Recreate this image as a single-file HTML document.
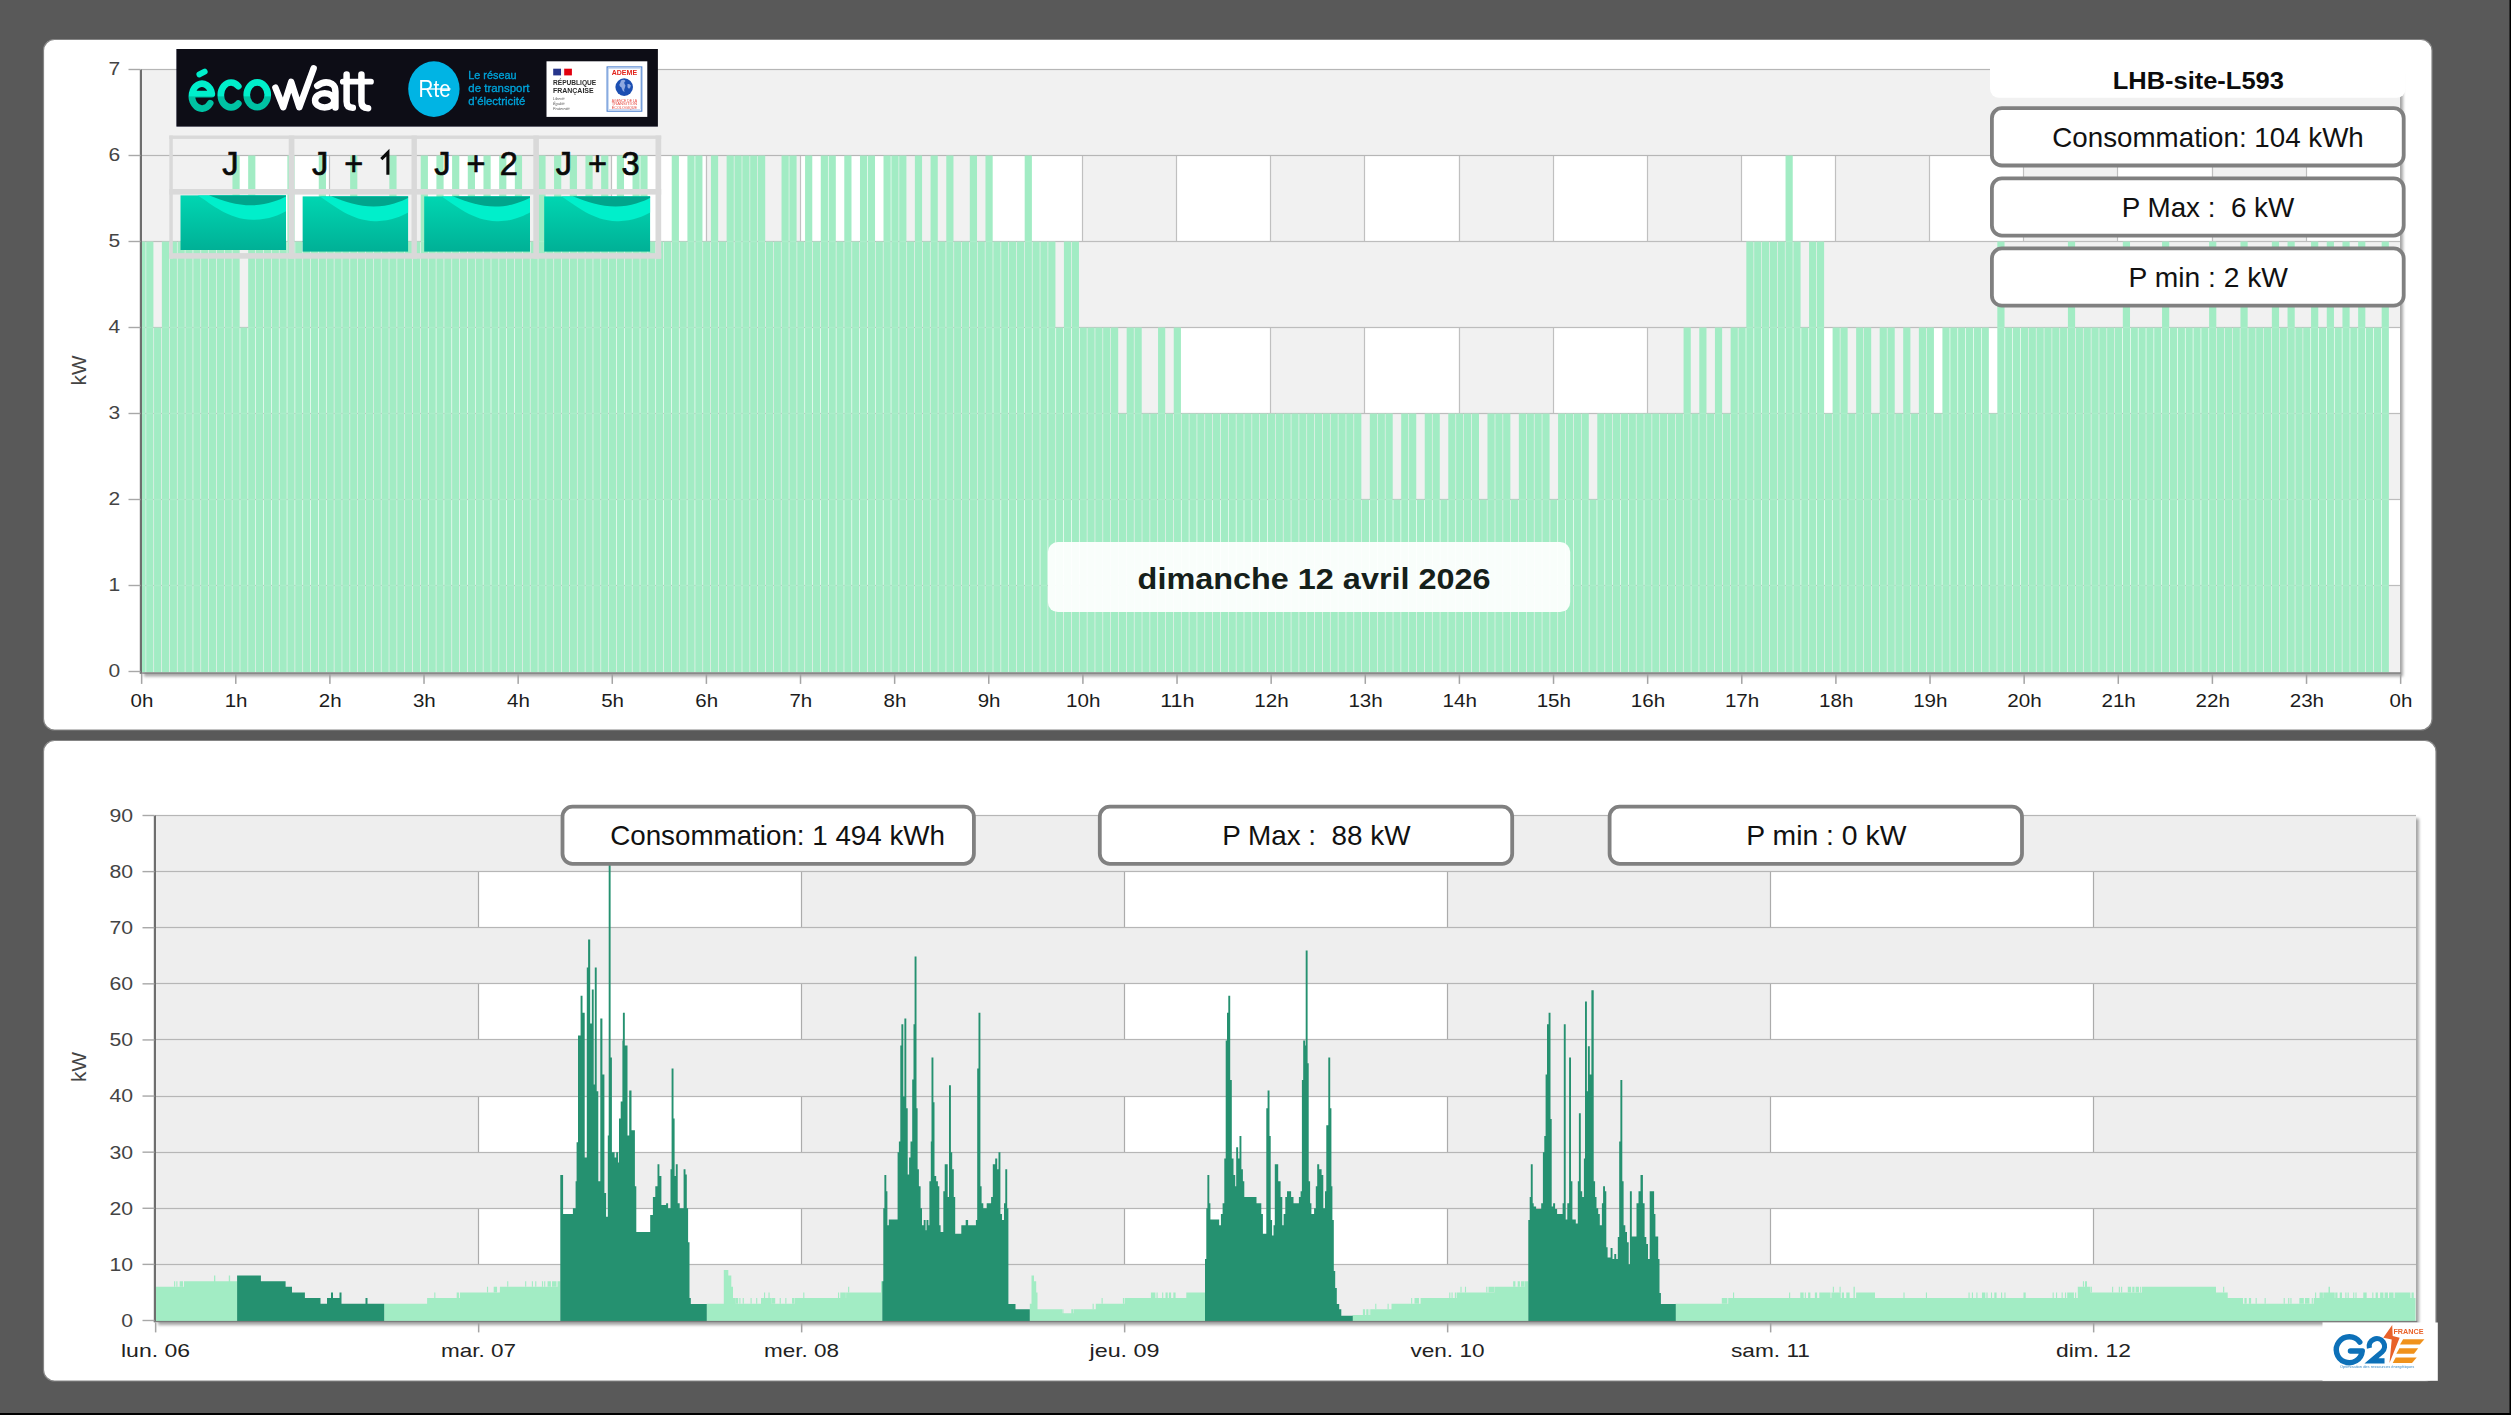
<!DOCTYPE html>
<html><head><meta charset="utf-8"><title>chart</title>
<style>html,body{margin:0;padding:0;background:#595959;}body{width:2511px;height:1415px;overflow:hidden;}svg{display:block;font-family:"Liberation Sans", sans-serif;}</style></head><body>
<svg width="2511" height="1415" viewBox="0 0 2511 1415">
<defs>
<filter id="sh" x="-2%" y="-2%" width="104%" height="104%"><feGaussianBlur stdDeviation="1.6"/></filter>
<filter id="b1" x="-2%" y="-2%" width="104%" height="104%"><feGaussianBlur stdDeviation="0.55"/></filter>
<clipPath id="cpTop"><rect x="141.0" y="69.5" width="2259.0" height="603.0"/></clipPath>
<linearGradient id="tg" x1="0" y1="0" x2="0" y2="1"><stop offset="0" stop-color="#00d6b2"/><stop offset="1" stop-color="#00b096"/></linearGradient>
<linearGradient id="eco" gradientUnits="userSpaceOnUse" x1="0" y1="300" x2="0" y2="680"><stop offset="0" stop-color="#00efcb"/><stop offset="0.52" stop-color="#00efcb"/><stop offset="0.56" stop-color="#00c2a3"/><stop offset="1" stop-color="#00c2a3"/></linearGradient>
</defs>
<rect width="2511" height="1415" fill="#595959"/>
<rect x="0" y="1413" width="2511" height="2" fill="#000"/>
<rect x="2509.5" y="0" width="1.5" height="1415" fill="#000"/>
<rect x="43.5" y="39.5" width="2388.5" height="690.5" rx="11" ry="11" fill="#ffffff" stroke="#858585" stroke-width="1.2"/>
<rect x="43.5" y="740.5" width="2392.5" height="640.5" rx="11" ry="11" fill="#ffffff" stroke="#858585" stroke-width="1.2"/>
<g id="topchart">
<rect x="144.0" y="72.5" width="2259.0" height="604.0" fill="#a6a6a6" filter="url(#sh)"/>
<rect x="141.0" y="69.5" width="2259.0" height="602.0" fill="#ffffff"/>
<rect x="141.0" y="69.50" width="2259.0" height="86.00" fill="#f1f1f1"/>
<rect x="141.0" y="241.50" width="2259.0" height="86.00" fill="#f1f1f1"/>
<rect x="141.0" y="413.50" width="2259.0" height="86.00" fill="#f1f1f1"/>
<rect x="141.0" y="585.50" width="2259.0" height="87.00" fill="#f1f1f1"/>
<rect x="141.00" y="69.5" width="94.12" height="602.0" fill="#f1f1f1"/>
<rect x="329.25" y="69.5" width="94.12" height="602.0" fill="#f1f1f1"/>
<rect x="517.50" y="69.5" width="94.12" height="602.0" fill="#f1f1f1"/>
<rect x="705.75" y="69.5" width="94.12" height="602.0" fill="#f1f1f1"/>
<rect x="894.00" y="69.5" width="94.12" height="602.0" fill="#f1f1f1"/>
<rect x="1082.25" y="69.5" width="94.12" height="602.0" fill="#f1f1f1"/>
<rect x="1270.50" y="69.5" width="94.12" height="602.0" fill="#f1f1f1"/>
<rect x="1458.75" y="69.5" width="94.12" height="602.0" fill="#f1f1f1"/>
<rect x="1647.00" y="69.5" width="94.12" height="602.0" fill="#f1f1f1"/>
<rect x="1835.25" y="69.5" width="94.12" height="602.0" fill="#f1f1f1"/>
<rect x="2023.50" y="69.5" width="94.12" height="602.0" fill="#f1f1f1"/>
<rect x="2211.75" y="69.5" width="94.12" height="602.0" fill="#f1f1f1"/>
<rect x="234.90" y="155.50" width="1.2" height="86.00" fill="#c0c0c0"/>
<rect x="234.90" y="327.50" width="1.2" height="86.00" fill="#c0c0c0"/>
<rect x="234.90" y="499.50" width="1.2" height="86.00" fill="#c0c0c0"/>
<rect x="328.90" y="155.50" width="1.2" height="86.00" fill="#c0c0c0"/>
<rect x="328.90" y="327.50" width="1.2" height="86.00" fill="#c0c0c0"/>
<rect x="328.90" y="499.50" width="1.2" height="86.00" fill="#c0c0c0"/>
<rect x="422.90" y="155.50" width="1.2" height="86.00" fill="#c0c0c0"/>
<rect x="422.90" y="327.50" width="1.2" height="86.00" fill="#c0c0c0"/>
<rect x="422.90" y="499.50" width="1.2" height="86.00" fill="#c0c0c0"/>
<rect x="516.90" y="155.50" width="1.2" height="86.00" fill="#c0c0c0"/>
<rect x="516.90" y="327.50" width="1.2" height="86.00" fill="#c0c0c0"/>
<rect x="516.90" y="499.50" width="1.2" height="86.00" fill="#c0c0c0"/>
<rect x="610.90" y="155.50" width="1.2" height="86.00" fill="#c0c0c0"/>
<rect x="610.90" y="327.50" width="1.2" height="86.00" fill="#c0c0c0"/>
<rect x="610.90" y="499.50" width="1.2" height="86.00" fill="#c0c0c0"/>
<rect x="705.90" y="155.50" width="1.2" height="86.00" fill="#c0c0c0"/>
<rect x="705.90" y="327.50" width="1.2" height="86.00" fill="#c0c0c0"/>
<rect x="705.90" y="499.50" width="1.2" height="86.00" fill="#c0c0c0"/>
<rect x="799.90" y="155.50" width="1.2" height="86.00" fill="#c0c0c0"/>
<rect x="799.90" y="327.50" width="1.2" height="86.00" fill="#c0c0c0"/>
<rect x="799.90" y="499.50" width="1.2" height="86.00" fill="#c0c0c0"/>
<rect x="893.90" y="155.50" width="1.2" height="86.00" fill="#c0c0c0"/>
<rect x="893.90" y="327.50" width="1.2" height="86.00" fill="#c0c0c0"/>
<rect x="893.90" y="499.50" width="1.2" height="86.00" fill="#c0c0c0"/>
<rect x="987.90" y="155.50" width="1.2" height="86.00" fill="#c0c0c0"/>
<rect x="987.90" y="327.50" width="1.2" height="86.00" fill="#c0c0c0"/>
<rect x="987.90" y="499.50" width="1.2" height="86.00" fill="#c0c0c0"/>
<rect x="1081.90" y="155.50" width="1.2" height="86.00" fill="#c0c0c0"/>
<rect x="1081.90" y="327.50" width="1.2" height="86.00" fill="#c0c0c0"/>
<rect x="1081.90" y="499.50" width="1.2" height="86.00" fill="#c0c0c0"/>
<rect x="1175.90" y="155.50" width="1.2" height="86.00" fill="#c0c0c0"/>
<rect x="1175.90" y="327.50" width="1.2" height="86.00" fill="#c0c0c0"/>
<rect x="1175.90" y="499.50" width="1.2" height="86.00" fill="#c0c0c0"/>
<rect x="1269.90" y="155.50" width="1.2" height="86.00" fill="#c0c0c0"/>
<rect x="1269.90" y="327.50" width="1.2" height="86.00" fill="#c0c0c0"/>
<rect x="1269.90" y="499.50" width="1.2" height="86.00" fill="#c0c0c0"/>
<rect x="1363.90" y="155.50" width="1.2" height="86.00" fill="#c0c0c0"/>
<rect x="1363.90" y="327.50" width="1.2" height="86.00" fill="#c0c0c0"/>
<rect x="1363.90" y="499.50" width="1.2" height="86.00" fill="#c0c0c0"/>
<rect x="1458.90" y="155.50" width="1.2" height="86.00" fill="#c0c0c0"/>
<rect x="1458.90" y="327.50" width="1.2" height="86.00" fill="#c0c0c0"/>
<rect x="1458.90" y="499.50" width="1.2" height="86.00" fill="#c0c0c0"/>
<rect x="1552.90" y="155.50" width="1.2" height="86.00" fill="#c0c0c0"/>
<rect x="1552.90" y="327.50" width="1.2" height="86.00" fill="#c0c0c0"/>
<rect x="1552.90" y="499.50" width="1.2" height="86.00" fill="#c0c0c0"/>
<rect x="1646.90" y="155.50" width="1.2" height="86.00" fill="#c0c0c0"/>
<rect x="1646.90" y="327.50" width="1.2" height="86.00" fill="#c0c0c0"/>
<rect x="1646.90" y="499.50" width="1.2" height="86.00" fill="#c0c0c0"/>
<rect x="1740.90" y="155.50" width="1.2" height="86.00" fill="#c0c0c0"/>
<rect x="1740.90" y="327.50" width="1.2" height="86.00" fill="#c0c0c0"/>
<rect x="1740.90" y="499.50" width="1.2" height="86.00" fill="#c0c0c0"/>
<rect x="1834.90" y="155.50" width="1.2" height="86.00" fill="#c0c0c0"/>
<rect x="1834.90" y="327.50" width="1.2" height="86.00" fill="#c0c0c0"/>
<rect x="1834.90" y="499.50" width="1.2" height="86.00" fill="#c0c0c0"/>
<rect x="1928.90" y="155.50" width="1.2" height="86.00" fill="#c0c0c0"/>
<rect x="1928.90" y="327.50" width="1.2" height="86.00" fill="#c0c0c0"/>
<rect x="1928.90" y="499.50" width="1.2" height="86.00" fill="#c0c0c0"/>
<rect x="2022.90" y="155.50" width="1.2" height="86.00" fill="#c0c0c0"/>
<rect x="2022.90" y="327.50" width="1.2" height="86.00" fill="#c0c0c0"/>
<rect x="2022.90" y="499.50" width="1.2" height="86.00" fill="#c0c0c0"/>
<rect x="2116.90" y="155.50" width="1.2" height="86.00" fill="#c0c0c0"/>
<rect x="2116.90" y="327.50" width="1.2" height="86.00" fill="#c0c0c0"/>
<rect x="2116.90" y="499.50" width="1.2" height="86.00" fill="#c0c0c0"/>
<rect x="2211.90" y="155.50" width="1.2" height="86.00" fill="#c0c0c0"/>
<rect x="2211.90" y="327.50" width="1.2" height="86.00" fill="#c0c0c0"/>
<rect x="2211.90" y="499.50" width="1.2" height="86.00" fill="#c0c0c0"/>
<rect x="2305.90" y="155.50" width="1.2" height="86.00" fill="#c0c0c0"/>
<rect x="2305.90" y="327.50" width="1.2" height="86.00" fill="#c0c0c0"/>
<rect x="2305.90" y="499.50" width="1.2" height="86.00" fill="#c0c0c0"/>
<rect x="141.0" y="584.90" width="2259.0" height="1.2" fill="#b6b6b6"/>
<rect x="141.0" y="498.90" width="2259.0" height="1.2" fill="#b6b6b6"/>
<rect x="141.0" y="412.90" width="2259.0" height="1.2" fill="#b6b6b6"/>
<rect x="141.0" y="326.90" width="2259.0" height="1.2" fill="#b6b6b6"/>
<rect x="141.0" y="240.90" width="2259.0" height="1.2" fill="#b6b6b6"/>
<rect x="141.0" y="154.90" width="2259.0" height="1.2" fill="#b6b6b6"/>
<rect x="141.0" y="68.90" width="2259.0" height="1.2" fill="#b6b6b6"/>
<g fill="#a2ecc4" clip-path="url(#cpTop)">
<rect x="138.35" y="241.50" width="7.2" height="431.00"/>
<rect x="146.19" y="241.50" width="7.2" height="431.00"/>
<rect x="154.04" y="327.50" width="7.2" height="345.00"/>
<rect x="161.88" y="241.50" width="7.2" height="431.00"/>
<rect x="169.72" y="241.50" width="7.2" height="431.00"/>
<rect x="177.57" y="241.50" width="7.2" height="431.00"/>
<rect x="185.41" y="241.50" width="7.2" height="431.00"/>
<rect x="193.26" y="241.50" width="7.2" height="431.00"/>
<rect x="201.10" y="241.50" width="7.2" height="431.00"/>
<rect x="208.94" y="241.50" width="7.2" height="431.00"/>
<rect x="216.79" y="241.50" width="7.2" height="431.00"/>
<rect x="224.63" y="241.50" width="7.2" height="431.00"/>
<rect x="232.47" y="155.50" width="7.2" height="517.00"/>
<rect x="240.32" y="327.50" width="7.2" height="345.00"/>
<rect x="248.16" y="155.50" width="7.2" height="517.00"/>
<rect x="256.01" y="241.50" width="7.2" height="431.00"/>
<rect x="263.85" y="241.50" width="7.2" height="431.00"/>
<rect x="271.69" y="241.50" width="7.2" height="431.00"/>
<rect x="279.54" y="241.50" width="7.2" height="431.00"/>
<rect x="287.38" y="155.50" width="7.2" height="517.00"/>
<rect x="295.22" y="241.50" width="7.2" height="431.00"/>
<rect x="303.07" y="241.50" width="7.2" height="431.00"/>
<rect x="310.91" y="241.50" width="7.2" height="431.00"/>
<rect x="318.76" y="155.50" width="7.2" height="517.00"/>
<rect x="326.60" y="241.50" width="7.2" height="431.00"/>
<rect x="334.44" y="241.50" width="7.2" height="431.00"/>
<rect x="342.29" y="241.50" width="7.2" height="431.00"/>
<rect x="350.13" y="155.50" width="7.2" height="517.00"/>
<rect x="357.97" y="241.50" width="7.2" height="431.00"/>
<rect x="365.82" y="241.50" width="7.2" height="431.00"/>
<rect x="373.66" y="241.50" width="7.2" height="431.00"/>
<rect x="381.51" y="241.50" width="7.2" height="431.00"/>
<rect x="389.35" y="155.50" width="7.2" height="517.00"/>
<rect x="397.19" y="241.50" width="7.2" height="431.00"/>
<rect x="405.04" y="241.50" width="7.2" height="431.00"/>
<rect x="412.88" y="241.50" width="7.2" height="431.00"/>
<rect x="420.72" y="155.50" width="7.2" height="517.00"/>
<rect x="428.57" y="241.50" width="7.2" height="431.00"/>
<rect x="436.41" y="155.50" width="7.2" height="517.00"/>
<rect x="444.26" y="241.50" width="7.2" height="431.00"/>
<rect x="452.10" y="155.50" width="7.2" height="517.00"/>
<rect x="459.94" y="241.50" width="7.2" height="431.00"/>
<rect x="467.79" y="155.50" width="7.2" height="517.00"/>
<rect x="475.63" y="241.50" width="7.2" height="431.00"/>
<rect x="483.47" y="155.50" width="7.2" height="517.00"/>
<rect x="491.32" y="241.50" width="7.2" height="431.00"/>
<rect x="499.16" y="155.50" width="7.2" height="517.00"/>
<rect x="507.01" y="241.50" width="7.2" height="431.00"/>
<rect x="514.85" y="155.50" width="7.2" height="517.00"/>
<rect x="522.69" y="241.50" width="7.2" height="431.00"/>
<rect x="530.54" y="241.50" width="7.2" height="431.00"/>
<rect x="538.38" y="155.50" width="7.2" height="517.00"/>
<rect x="546.23" y="241.50" width="7.2" height="431.00"/>
<rect x="554.07" y="155.50" width="7.2" height="517.00"/>
<rect x="561.91" y="241.50" width="7.2" height="431.00"/>
<rect x="569.76" y="155.50" width="7.2" height="517.00"/>
<rect x="577.60" y="241.50" width="7.2" height="431.00"/>
<rect x="585.44" y="155.50" width="7.2" height="517.00"/>
<rect x="593.29" y="241.50" width="7.2" height="431.00"/>
<rect x="601.13" y="155.50" width="7.2" height="517.00"/>
<rect x="608.98" y="241.50" width="7.2" height="431.00"/>
<rect x="616.82" y="155.50" width="7.2" height="517.00"/>
<rect x="624.66" y="241.50" width="7.2" height="431.00"/>
<rect x="632.51" y="155.50" width="7.2" height="517.00"/>
<rect x="640.35" y="155.50" width="7.2" height="517.00"/>
<rect x="648.19" y="241.50" width="7.2" height="431.00"/>
<rect x="656.04" y="241.50" width="7.2" height="431.00"/>
<rect x="663.88" y="241.50" width="7.2" height="431.00"/>
<rect x="671.73" y="155.50" width="7.2" height="517.00"/>
<rect x="679.57" y="241.50" width="7.2" height="431.00"/>
<rect x="687.41" y="155.50" width="7.2" height="517.00"/>
<rect x="695.26" y="155.50" width="7.2" height="517.00"/>
<rect x="703.10" y="241.50" width="7.2" height="431.00"/>
<rect x="710.94" y="155.50" width="7.2" height="517.00"/>
<rect x="718.79" y="241.50" width="7.2" height="431.00"/>
<rect x="726.63" y="155.50" width="7.2" height="517.00"/>
<rect x="734.48" y="155.50" width="7.2" height="517.00"/>
<rect x="742.32" y="155.50" width="7.2" height="517.00"/>
<rect x="750.16" y="155.50" width="7.2" height="517.00"/>
<rect x="758.01" y="155.50" width="7.2" height="517.00"/>
<rect x="765.85" y="241.50" width="7.2" height="431.00"/>
<rect x="773.69" y="241.50" width="7.2" height="431.00"/>
<rect x="781.54" y="155.50" width="7.2" height="517.00"/>
<rect x="789.38" y="155.50" width="7.2" height="517.00"/>
<rect x="797.23" y="241.50" width="7.2" height="431.00"/>
<rect x="805.07" y="155.50" width="7.2" height="517.00"/>
<rect x="812.91" y="241.50" width="7.2" height="431.00"/>
<rect x="820.76" y="155.50" width="7.2" height="517.00"/>
<rect x="828.60" y="155.50" width="7.2" height="517.00"/>
<rect x="836.44" y="241.50" width="7.2" height="431.00"/>
<rect x="844.29" y="155.50" width="7.2" height="517.00"/>
<rect x="852.13" y="241.50" width="7.2" height="431.00"/>
<rect x="859.98" y="155.50" width="7.2" height="517.00"/>
<rect x="867.82" y="155.50" width="7.2" height="517.00"/>
<rect x="875.66" y="241.50" width="7.2" height="431.00"/>
<rect x="883.51" y="155.50" width="7.2" height="517.00"/>
<rect x="891.35" y="155.50" width="7.2" height="517.00"/>
<rect x="899.19" y="155.50" width="7.2" height="517.00"/>
<rect x="907.04" y="241.50" width="7.2" height="431.00"/>
<rect x="914.88" y="155.50" width="7.2" height="517.00"/>
<rect x="922.73" y="241.50" width="7.2" height="431.00"/>
<rect x="930.57" y="155.50" width="7.2" height="517.00"/>
<rect x="938.41" y="241.50" width="7.2" height="431.00"/>
<rect x="946.26" y="155.50" width="7.2" height="517.00"/>
<rect x="954.10" y="241.50" width="7.2" height="431.00"/>
<rect x="961.94" y="241.50" width="7.2" height="431.00"/>
<rect x="969.79" y="155.50" width="7.2" height="517.00"/>
<rect x="977.63" y="241.50" width="7.2" height="431.00"/>
<rect x="985.48" y="155.50" width="7.2" height="517.00"/>
<rect x="993.32" y="241.50" width="7.2" height="431.00"/>
<rect x="1001.16" y="241.50" width="7.2" height="431.00"/>
<rect x="1009.01" y="241.50" width="7.2" height="431.00"/>
<rect x="1016.85" y="241.50" width="7.2" height="431.00"/>
<rect x="1024.69" y="155.50" width="7.2" height="517.00"/>
<rect x="1032.54" y="241.50" width="7.2" height="431.00"/>
<rect x="1040.38" y="241.50" width="7.2" height="431.00"/>
<rect x="1048.23" y="241.50" width="7.2" height="431.00"/>
<rect x="1056.07" y="327.50" width="7.2" height="345.00"/>
<rect x="1063.91" y="241.50" width="7.2" height="431.00"/>
<rect x="1071.76" y="241.50" width="7.2" height="431.00"/>
<rect x="1079.60" y="327.50" width="7.2" height="345.00"/>
<rect x="1087.44" y="327.50" width="7.2" height="345.00"/>
<rect x="1095.29" y="327.50" width="7.2" height="345.00"/>
<rect x="1103.13" y="327.50" width="7.2" height="345.00"/>
<rect x="1110.98" y="327.50" width="7.2" height="345.00"/>
<rect x="1118.82" y="413.50" width="7.2" height="259.00"/>
<rect x="1126.66" y="327.50" width="7.2" height="345.00"/>
<rect x="1134.51" y="327.50" width="7.2" height="345.00"/>
<rect x="1142.35" y="413.50" width="7.2" height="259.00"/>
<rect x="1150.19" y="413.50" width="7.2" height="259.00"/>
<rect x="1158.04" y="327.50" width="7.2" height="345.00"/>
<rect x="1165.88" y="413.50" width="7.2" height="259.00"/>
<rect x="1173.73" y="327.50" width="7.2" height="345.00"/>
<rect x="1181.57" y="413.50" width="7.2" height="259.00"/>
<rect x="1189.41" y="413.50" width="7.2" height="259.00"/>
<rect x="1197.26" y="413.50" width="7.2" height="259.00"/>
<rect x="1205.10" y="413.50" width="7.2" height="259.00"/>
<rect x="1212.94" y="413.50" width="7.2" height="259.00"/>
<rect x="1220.79" y="413.50" width="7.2" height="259.00"/>
<rect x="1228.63" y="413.50" width="7.2" height="259.00"/>
<rect x="1236.48" y="413.50" width="7.2" height="259.00"/>
<rect x="1244.32" y="413.50" width="7.2" height="259.00"/>
<rect x="1252.16" y="413.50" width="7.2" height="259.00"/>
<rect x="1260.01" y="413.50" width="7.2" height="259.00"/>
<rect x="1267.85" y="413.50" width="7.2" height="259.00"/>
<rect x="1275.69" y="413.50" width="7.2" height="259.00"/>
<rect x="1283.54" y="413.50" width="7.2" height="259.00"/>
<rect x="1291.38" y="413.50" width="7.2" height="259.00"/>
<rect x="1299.23" y="413.50" width="7.2" height="259.00"/>
<rect x="1307.07" y="413.50" width="7.2" height="259.00"/>
<rect x="1314.91" y="413.50" width="7.2" height="259.00"/>
<rect x="1322.76" y="413.50" width="7.2" height="259.00"/>
<rect x="1330.60" y="413.50" width="7.2" height="259.00"/>
<rect x="1338.44" y="413.50" width="7.2" height="259.00"/>
<rect x="1346.29" y="413.50" width="7.2" height="259.00"/>
<rect x="1354.13" y="413.50" width="7.2" height="259.00"/>
<rect x="1361.98" y="499.50" width="7.2" height="173.00"/>
<rect x="1369.82" y="413.50" width="7.2" height="259.00"/>
<rect x="1377.66" y="413.50" width="7.2" height="259.00"/>
<rect x="1385.51" y="413.50" width="7.2" height="259.00"/>
<rect x="1393.35" y="499.50" width="7.2" height="173.00"/>
<rect x="1401.19" y="413.50" width="7.2" height="259.00"/>
<rect x="1409.04" y="413.50" width="7.2" height="259.00"/>
<rect x="1416.88" y="499.50" width="7.2" height="173.00"/>
<rect x="1424.73" y="413.50" width="7.2" height="259.00"/>
<rect x="1432.57" y="413.50" width="7.2" height="259.00"/>
<rect x="1440.41" y="499.50" width="7.2" height="173.00"/>
<rect x="1448.26" y="413.50" width="7.2" height="259.00"/>
<rect x="1456.10" y="413.50" width="7.2" height="259.00"/>
<rect x="1463.94" y="413.50" width="7.2" height="259.00"/>
<rect x="1471.79" y="413.50" width="7.2" height="259.00"/>
<rect x="1479.63" y="499.50" width="7.2" height="173.00"/>
<rect x="1487.48" y="413.50" width="7.2" height="259.00"/>
<rect x="1495.32" y="413.50" width="7.2" height="259.00"/>
<rect x="1503.16" y="413.50" width="7.2" height="259.00"/>
<rect x="1511.01" y="499.50" width="7.2" height="173.00"/>
<rect x="1518.85" y="413.50" width="7.2" height="259.00"/>
<rect x="1526.69" y="413.50" width="7.2" height="259.00"/>
<rect x="1534.54" y="413.50" width="7.2" height="259.00"/>
<rect x="1542.38" y="413.50" width="7.2" height="259.00"/>
<rect x="1550.23" y="499.50" width="7.2" height="173.00"/>
<rect x="1558.07" y="413.50" width="7.2" height="259.00"/>
<rect x="1565.91" y="413.50" width="7.2" height="259.00"/>
<rect x="1573.76" y="413.50" width="7.2" height="259.00"/>
<rect x="1581.60" y="413.50" width="7.2" height="259.00"/>
<rect x="1589.44" y="499.50" width="7.2" height="173.00"/>
<rect x="1597.29" y="413.50" width="7.2" height="259.00"/>
<rect x="1605.13" y="413.50" width="7.2" height="259.00"/>
<rect x="1612.98" y="413.50" width="7.2" height="259.00"/>
<rect x="1620.82" y="413.50" width="7.2" height="259.00"/>
<rect x="1628.66" y="413.50" width="7.2" height="259.00"/>
<rect x="1636.51" y="413.50" width="7.2" height="259.00"/>
<rect x="1644.35" y="413.50" width="7.2" height="259.00"/>
<rect x="1652.19" y="413.50" width="7.2" height="259.00"/>
<rect x="1660.04" y="413.50" width="7.2" height="259.00"/>
<rect x="1667.88" y="413.50" width="7.2" height="259.00"/>
<rect x="1675.73" y="413.50" width="7.2" height="259.00"/>
<rect x="1683.57" y="327.50" width="7.2" height="345.00"/>
<rect x="1691.41" y="413.50" width="7.2" height="259.00"/>
<rect x="1699.26" y="327.50" width="7.2" height="345.00"/>
<rect x="1707.10" y="413.50" width="7.2" height="259.00"/>
<rect x="1714.94" y="327.50" width="7.2" height="345.00"/>
<rect x="1722.79" y="413.50" width="7.2" height="259.00"/>
<rect x="1730.63" y="327.50" width="7.2" height="345.00"/>
<rect x="1738.48" y="327.50" width="7.2" height="345.00"/>
<rect x="1746.32" y="241.50" width="7.2" height="431.00"/>
<rect x="1754.16" y="241.50" width="7.2" height="431.00"/>
<rect x="1762.01" y="241.50" width="7.2" height="431.00"/>
<rect x="1769.85" y="241.50" width="7.2" height="431.00"/>
<rect x="1777.69" y="241.50" width="7.2" height="431.00"/>
<rect x="1785.54" y="155.50" width="7.2" height="517.00"/>
<rect x="1793.38" y="241.50" width="7.2" height="431.00"/>
<rect x="1801.23" y="327.50" width="7.2" height="345.00"/>
<rect x="1809.07" y="241.50" width="7.2" height="431.00"/>
<rect x="1816.91" y="241.50" width="7.2" height="431.00"/>
<rect x="1824.76" y="413.50" width="7.2" height="259.00"/>
<rect x="1832.60" y="327.50" width="7.2" height="345.00"/>
<rect x="1840.44" y="327.50" width="7.2" height="345.00"/>
<rect x="1848.29" y="413.50" width="7.2" height="259.00"/>
<rect x="1856.13" y="327.50" width="7.2" height="345.00"/>
<rect x="1863.98" y="327.50" width="7.2" height="345.00"/>
<rect x="1871.82" y="413.50" width="7.2" height="259.00"/>
<rect x="1879.66" y="327.50" width="7.2" height="345.00"/>
<rect x="1887.51" y="327.50" width="7.2" height="345.00"/>
<rect x="1895.35" y="413.50" width="7.2" height="259.00"/>
<rect x="1903.19" y="327.50" width="7.2" height="345.00"/>
<rect x="1911.04" y="413.50" width="7.2" height="259.00"/>
<rect x="1918.88" y="327.50" width="7.2" height="345.00"/>
<rect x="1926.73" y="327.50" width="7.2" height="345.00"/>
<rect x="1934.57" y="413.50" width="7.2" height="259.00"/>
<rect x="1942.41" y="327.50" width="7.2" height="345.00"/>
<rect x="1950.26" y="327.50" width="7.2" height="345.00"/>
<rect x="1958.10" y="327.50" width="7.2" height="345.00"/>
<rect x="1965.94" y="327.50" width="7.2" height="345.00"/>
<rect x="1973.79" y="327.50" width="7.2" height="345.00"/>
<rect x="1981.63" y="327.50" width="7.2" height="345.00"/>
<rect x="1989.48" y="413.50" width="7.2" height="259.00"/>
<rect x="1997.32" y="241.50" width="7.2" height="431.00"/>
<rect x="2005.16" y="327.50" width="7.2" height="345.00"/>
<rect x="2013.01" y="327.50" width="7.2" height="345.00"/>
<rect x="2020.85" y="327.50" width="7.2" height="345.00"/>
<rect x="2028.69" y="327.50" width="7.2" height="345.00"/>
<rect x="2036.54" y="327.50" width="7.2" height="345.00"/>
<rect x="2044.38" y="327.50" width="7.2" height="345.00"/>
<rect x="2052.22" y="327.50" width="7.2" height="345.00"/>
<rect x="2060.07" y="327.50" width="7.2" height="345.00"/>
<rect x="2067.91" y="241.50" width="7.2" height="431.00"/>
<rect x="2075.76" y="327.50" width="7.2" height="345.00"/>
<rect x="2083.60" y="327.50" width="7.2" height="345.00"/>
<rect x="2091.44" y="327.50" width="7.2" height="345.00"/>
<rect x="2099.29" y="327.50" width="7.2" height="345.00"/>
<rect x="2107.13" y="327.50" width="7.2" height="345.00"/>
<rect x="2114.97" y="327.50" width="7.2" height="345.00"/>
<rect x="2122.82" y="241.50" width="7.2" height="431.00"/>
<rect x="2130.66" y="327.50" width="7.2" height="345.00"/>
<rect x="2138.51" y="327.50" width="7.2" height="345.00"/>
<rect x="2146.35" y="327.50" width="7.2" height="345.00"/>
<rect x="2154.19" y="327.50" width="7.2" height="345.00"/>
<rect x="2162.04" y="241.50" width="7.2" height="431.00"/>
<rect x="2169.88" y="327.50" width="7.2" height="345.00"/>
<rect x="2177.72" y="327.50" width="7.2" height="345.00"/>
<rect x="2185.57" y="327.50" width="7.2" height="345.00"/>
<rect x="2193.41" y="327.50" width="7.2" height="345.00"/>
<rect x="2201.26" y="327.50" width="7.2" height="345.00"/>
<rect x="2209.10" y="241.50" width="7.2" height="431.00"/>
<rect x="2216.94" y="327.50" width="7.2" height="345.00"/>
<rect x="2224.79" y="327.50" width="7.2" height="345.00"/>
<rect x="2232.63" y="327.50" width="7.2" height="345.00"/>
<rect x="2240.47" y="241.50" width="7.2" height="431.00"/>
<rect x="2248.32" y="327.50" width="7.2" height="345.00"/>
<rect x="2256.16" y="327.50" width="7.2" height="345.00"/>
<rect x="2264.01" y="327.50" width="7.2" height="345.00"/>
<rect x="2271.85" y="241.50" width="7.2" height="431.00"/>
<rect x="2279.69" y="327.50" width="7.2" height="345.00"/>
<rect x="2287.54" y="241.50" width="7.2" height="431.00"/>
<rect x="2295.38" y="327.50" width="7.2" height="345.00"/>
<rect x="2303.22" y="327.50" width="7.2" height="345.00"/>
<rect x="2311.07" y="241.50" width="7.2" height="431.00"/>
<rect x="2318.91" y="327.50" width="7.2" height="345.00"/>
<rect x="2326.76" y="241.50" width="7.2" height="431.00"/>
<rect x="2334.60" y="327.50" width="7.2" height="345.00"/>
<rect x="2342.44" y="241.50" width="7.2" height="431.00"/>
<rect x="2350.29" y="327.50" width="7.2" height="345.00"/>
<rect x="2358.13" y="241.50" width="7.2" height="431.00"/>
<rect x="2365.97" y="327.50" width="7.2" height="345.00"/>
<rect x="2373.82" y="327.50" width="7.2" height="345.00"/>
<rect x="2381.66" y="241.50" width="7.2" height="431.00"/>
</g>
<rect x="141.0" y="584.70" width="2259.0" height="1.6" fill="#ffffff" opacity="0.10"/>
<rect x="141.0" y="498.70" width="2259.0" height="1.6" fill="#ffffff" opacity="0.10"/>
<rect x="141.0" y="412.70" width="2259.0" height="1.6" fill="#ffffff" opacity="0.10"/>
<rect x="141.0" y="326.70" width="2259.0" height="1.6" fill="#ffffff" opacity="0.10"/>
<rect x="141.0" y="240.70" width="2259.0" height="1.6" fill="#ffffff" opacity="0.10"/>
<rect x="139.8" y="69.5" width="2.2" height="604.2" fill="#6e6e6e"/>
<rect x="139.8" y="672.4" width="2261.4" height="1.3" fill="#7c7c7c"/>
<rect x="128.5" y="670.80" width="12" height="1.4" fill="#a8a8a8"/>
<text x="108.5" y="677.20" font-size="18.7" fill="#444" textLength="11.7" lengthAdjust="spacingAndGlyphs">0</text>
<rect x="128.5" y="584.80" width="12" height="1.4" fill="#a8a8a8"/>
<text x="108.5" y="591.20" font-size="18.7" fill="#444" textLength="11.7" lengthAdjust="spacingAndGlyphs">1</text>
<rect x="128.5" y="498.80" width="12" height="1.4" fill="#a8a8a8"/>
<text x="108.5" y="505.20" font-size="18.7" fill="#444" textLength="11.7" lengthAdjust="spacingAndGlyphs">2</text>
<rect x="128.5" y="412.80" width="12" height="1.4" fill="#a8a8a8"/>
<text x="108.5" y="419.20" font-size="18.7" fill="#444" textLength="11.7" lengthAdjust="spacingAndGlyphs">3</text>
<rect x="128.5" y="326.80" width="12" height="1.4" fill="#a8a8a8"/>
<text x="108.5" y="333.20" font-size="18.7" fill="#444" textLength="11.7" lengthAdjust="spacingAndGlyphs">4</text>
<rect x="128.5" y="240.80" width="12" height="1.4" fill="#a8a8a8"/>
<text x="108.5" y="247.20" font-size="18.7" fill="#444" textLength="11.7" lengthAdjust="spacingAndGlyphs">5</text>
<rect x="128.5" y="154.80" width="12" height="1.4" fill="#a8a8a8"/>
<text x="108.5" y="161.20" font-size="18.7" fill="#444" textLength="11.7" lengthAdjust="spacingAndGlyphs">6</text>
<rect x="128.5" y="68.80" width="12" height="1.4" fill="#a8a8a8"/>
<text x="108.5" y="75.20" font-size="18.7" fill="#444" textLength="11.7" lengthAdjust="spacingAndGlyphs">7</text>
<rect x="140.90" y="673.9" width="1.5" height="10" fill="#a4a4a4"/>
<text x="130.60" y="706.5" font-size="18.5" fill="#1c1c1c" textLength="22.8" lengthAdjust="spacingAndGlyphs">0h</text>
<rect x="235.03" y="673.9" width="1.5" height="10" fill="#a4a4a4"/>
<text x="224.72" y="706.5" font-size="18.5" fill="#1c1c1c" textLength="22.8" lengthAdjust="spacingAndGlyphs">1h</text>
<rect x="329.15" y="673.9" width="1.5" height="10" fill="#a4a4a4"/>
<text x="318.85" y="706.5" font-size="18.5" fill="#1c1c1c" textLength="22.8" lengthAdjust="spacingAndGlyphs">2h</text>
<rect x="423.27" y="673.9" width="1.5" height="10" fill="#a4a4a4"/>
<text x="412.98" y="706.5" font-size="18.5" fill="#1c1c1c" textLength="22.8" lengthAdjust="spacingAndGlyphs">3h</text>
<rect x="517.40" y="673.9" width="1.5" height="10" fill="#a4a4a4"/>
<text x="507.10" y="706.5" font-size="18.5" fill="#1c1c1c" textLength="22.8" lengthAdjust="spacingAndGlyphs">4h</text>
<rect x="611.52" y="673.9" width="1.5" height="10" fill="#a4a4a4"/>
<text x="601.23" y="706.5" font-size="18.5" fill="#1c1c1c" textLength="22.8" lengthAdjust="spacingAndGlyphs">5h</text>
<rect x="705.65" y="673.9" width="1.5" height="10" fill="#a4a4a4"/>
<text x="695.35" y="706.5" font-size="18.5" fill="#1c1c1c" textLength="22.8" lengthAdjust="spacingAndGlyphs">6h</text>
<rect x="799.77" y="673.9" width="1.5" height="10" fill="#a4a4a4"/>
<text x="789.48" y="706.5" font-size="18.5" fill="#1c1c1c" textLength="22.8" lengthAdjust="spacingAndGlyphs">7h</text>
<rect x="893.90" y="673.9" width="1.5" height="10" fill="#a4a4a4"/>
<text x="883.60" y="706.5" font-size="18.5" fill="#1c1c1c" textLength="22.8" lengthAdjust="spacingAndGlyphs">8h</text>
<rect x="988.02" y="673.9" width="1.5" height="10" fill="#a4a4a4"/>
<text x="977.73" y="706.5" font-size="18.5" fill="#1c1c1c" textLength="22.8" lengthAdjust="spacingAndGlyphs">9h</text>
<rect x="1082.15" y="673.9" width="1.5" height="10" fill="#a4a4a4"/>
<text x="1066.05" y="706.5" font-size="18.5" fill="#1c1c1c" textLength="34.4" lengthAdjust="spacingAndGlyphs">10h</text>
<rect x="1176.28" y="673.9" width="1.5" height="10" fill="#a4a4a4"/>
<text x="1160.17" y="706.5" font-size="18.5" fill="#1c1c1c" textLength="34.4" lengthAdjust="spacingAndGlyphs">11h</text>
<rect x="1270.40" y="673.9" width="1.5" height="10" fill="#a4a4a4"/>
<text x="1254.30" y="706.5" font-size="18.5" fill="#1c1c1c" textLength="34.4" lengthAdjust="spacingAndGlyphs">12h</text>
<rect x="1364.53" y="673.9" width="1.5" height="10" fill="#a4a4a4"/>
<text x="1348.42" y="706.5" font-size="18.5" fill="#1c1c1c" textLength="34.4" lengthAdjust="spacingAndGlyphs">13h</text>
<rect x="1458.65" y="673.9" width="1.5" height="10" fill="#a4a4a4"/>
<text x="1442.55" y="706.5" font-size="18.5" fill="#1c1c1c" textLength="34.4" lengthAdjust="spacingAndGlyphs">14h</text>
<rect x="1552.78" y="673.9" width="1.5" height="10" fill="#a4a4a4"/>
<text x="1536.67" y="706.5" font-size="18.5" fill="#1c1c1c" textLength="34.4" lengthAdjust="spacingAndGlyphs">15h</text>
<rect x="1646.90" y="673.9" width="1.5" height="10" fill="#a4a4a4"/>
<text x="1630.80" y="706.5" font-size="18.5" fill="#1c1c1c" textLength="34.4" lengthAdjust="spacingAndGlyphs">16h</text>
<rect x="1741.03" y="673.9" width="1.5" height="10" fill="#a4a4a4"/>
<text x="1724.92" y="706.5" font-size="18.5" fill="#1c1c1c" textLength="34.4" lengthAdjust="spacingAndGlyphs">17h</text>
<rect x="1835.15" y="673.9" width="1.5" height="10" fill="#a4a4a4"/>
<text x="1819.05" y="706.5" font-size="18.5" fill="#1c1c1c" textLength="34.4" lengthAdjust="spacingAndGlyphs">18h</text>
<rect x="1929.28" y="673.9" width="1.5" height="10" fill="#a4a4a4"/>
<text x="1913.17" y="706.5" font-size="18.5" fill="#1c1c1c" textLength="34.4" lengthAdjust="spacingAndGlyphs">19h</text>
<rect x="2023.40" y="673.9" width="1.5" height="10" fill="#a4a4a4"/>
<text x="2007.30" y="706.5" font-size="18.5" fill="#1c1c1c" textLength="34.4" lengthAdjust="spacingAndGlyphs">20h</text>
<rect x="2117.53" y="673.9" width="1.5" height="10" fill="#a4a4a4"/>
<text x="2101.43" y="706.5" font-size="18.5" fill="#1c1c1c" textLength="34.4" lengthAdjust="spacingAndGlyphs">21h</text>
<rect x="2211.65" y="673.9" width="1.5" height="10" fill="#a4a4a4"/>
<text x="2195.55" y="706.5" font-size="18.5" fill="#1c1c1c" textLength="34.4" lengthAdjust="spacingAndGlyphs">22h</text>
<rect x="2305.78" y="673.9" width="1.5" height="10" fill="#a4a4a4"/>
<text x="2289.68" y="706.5" font-size="18.5" fill="#1c1c1c" textLength="34.4" lengthAdjust="spacingAndGlyphs">23h</text>
<rect x="2399.90" y="673.9" width="1.5" height="10" fill="#a4a4a4"/>
<text x="2389.60" y="706.5" font-size="18.5" fill="#1c1c1c" textLength="22.8" lengthAdjust="spacingAndGlyphs">0h</text>
<text transform="translate(85.5,370.5) rotate(-90)" text-anchor="middle" font-size="20" fill="#444" textLength="30" lengthAdjust="spacingAndGlyphs">kW</text>
</g>
<g id="botchart">
<rect x="158.0" y="818.5" width="2261.0" height="506.6" fill="#a6a6a6" filter="url(#sh)"/>
<rect x="155.0" y="815.5" width="2261.0" height="505.0" fill="#ffffff"/>
<rect x="155.0" y="815.50" width="2261.0" height="56.11" fill="#eeeeee"/>
<rect x="155.0" y="927.72" width="2261.0" height="56.11" fill="#eeeeee"/>
<rect x="155.0" y="1039.94" width="2261.0" height="56.11" fill="#eeeeee"/>
<rect x="155.0" y="1152.17" width="2261.0" height="56.11" fill="#eeeeee"/>
<rect x="155.0" y="1264.39" width="2261.0" height="56.61" fill="#eeeeee"/>
<rect x="155.00" y="815.5" width="323.00" height="505.0" fill="#eeeeee"/>
<rect x="801.00" y="815.5" width="323.00" height="505.0" fill="#eeeeee"/>
<rect x="1447.00" y="815.5" width="323.00" height="505.0" fill="#eeeeee"/>
<rect x="2093.00" y="815.5" width="323.00" height="505.0" fill="#eeeeee"/>
<rect x="477.90" y="871.61" width="1.2" height="56.11" fill="#ababab"/>
<rect x="477.90" y="983.83" width="1.2" height="56.11" fill="#ababab"/>
<rect x="477.90" y="1096.06" width="1.2" height="56.11" fill="#ababab"/>
<rect x="477.90" y="1208.28" width="1.2" height="56.11" fill="#ababab"/>
<rect x="800.90" y="871.61" width="1.2" height="56.11" fill="#ababab"/>
<rect x="800.90" y="983.83" width="1.2" height="56.11" fill="#ababab"/>
<rect x="800.90" y="1096.06" width="1.2" height="56.11" fill="#ababab"/>
<rect x="800.90" y="1208.28" width="1.2" height="56.11" fill="#ababab"/>
<rect x="1123.90" y="871.61" width="1.2" height="56.11" fill="#ababab"/>
<rect x="1123.90" y="983.83" width="1.2" height="56.11" fill="#ababab"/>
<rect x="1123.90" y="1096.06" width="1.2" height="56.11" fill="#ababab"/>
<rect x="1123.90" y="1208.28" width="1.2" height="56.11" fill="#ababab"/>
<rect x="1446.90" y="871.61" width="1.2" height="56.11" fill="#ababab"/>
<rect x="1446.90" y="983.83" width="1.2" height="56.11" fill="#ababab"/>
<rect x="1446.90" y="1096.06" width="1.2" height="56.11" fill="#ababab"/>
<rect x="1446.90" y="1208.28" width="1.2" height="56.11" fill="#ababab"/>
<rect x="1769.90" y="871.61" width="1.2" height="56.11" fill="#ababab"/>
<rect x="1769.90" y="983.83" width="1.2" height="56.11" fill="#ababab"/>
<rect x="1769.90" y="1096.06" width="1.2" height="56.11" fill="#ababab"/>
<rect x="1769.90" y="1208.28" width="1.2" height="56.11" fill="#ababab"/>
<rect x="2092.90" y="871.61" width="1.2" height="56.11" fill="#ababab"/>
<rect x="2092.90" y="983.83" width="1.2" height="56.11" fill="#ababab"/>
<rect x="2092.90" y="1096.06" width="1.2" height="56.11" fill="#ababab"/>
<rect x="2092.90" y="1208.28" width="1.2" height="56.11" fill="#ababab"/>
<rect x="155.0" y="1263.90" width="2261.0" height="1.2" fill="#b6b6b6"/>
<rect x="155.0" y="1207.90" width="2261.0" height="1.2" fill="#b6b6b6"/>
<rect x="155.0" y="1151.90" width="2261.0" height="1.2" fill="#b6b6b6"/>
<rect x="155.0" y="1095.90" width="2261.0" height="1.2" fill="#b6b6b6"/>
<rect x="155.0" y="1038.90" width="2261.0" height="1.2" fill="#b6b6b6"/>
<rect x="155.0" y="982.90" width="2261.0" height="1.2" fill="#b6b6b6"/>
<rect x="155.0" y="926.90" width="2261.0" height="1.2" fill="#b6b6b6"/>
<rect x="155.0" y="870.90" width="2261.0" height="1.2" fill="#b6b6b6"/>
<rect x="155.0" y="814.90" width="2261.0" height="1.2" fill="#b6b6b6"/>
<path d="M155.0 1321.0V1286.8H174.0V1321.0ZM174.0 1321.0V1286.8H184.0V1321.0ZM184.0 1321.0V1281.2H237.1V1321.0ZM214.0 1321.0V1275.6H215.3V1321.0ZM228.8 1321.0V1275.6H230.1V1321.0ZM384.2 1321.0V1303.7H420.3V1321.0ZM420.3 1321.0V1303.7H427.1V1321.0ZM427.1 1321.0V1298.1H451.4V1321.0ZM451.4 1321.0V1298.1H459.9V1321.0ZM459.9 1321.0V1292.4H489.9V1321.0ZM489.9 1321.0V1292.4H499.9V1321.0ZM499.9 1321.0V1286.8H557.5V1321.0ZM557.5 1321.0V1281.2H560.3V1321.0ZM706.8 1321.0V1303.7H723.8V1321.0ZM723.8 1321.0V1270.0H728.3V1321.0ZM728.3 1321.0V1275.6H731.3V1321.0ZM731.3 1321.0V1286.8H733.0V1321.0ZM733.0 1321.0V1298.1H735.8V1321.0ZM735.8 1321.0V1303.7H761.0V1321.0ZM761.0 1321.0V1298.1H771.7V1321.0ZM771.7 1321.0V1303.7H784.6V1321.0ZM784.6 1321.0V1303.7H794.6V1321.0ZM794.6 1321.0V1298.1H836.2V1321.0ZM836.2 1321.0V1298.1H846.1V1321.0ZM846.1 1321.0V1292.4H881.0V1321.0ZM881.0 1321.0V1281.2H882.5V1321.0ZM1029.8 1321.0V1303.7H1031.5V1321.0ZM1031.5 1321.0V1275.6H1034.0V1321.0ZM1034.0 1321.0V1281.2H1036.2V1321.0ZM1036.2 1321.0V1292.4H1037.5V1321.0ZM1037.5 1321.0V1309.3H1062.0V1321.0ZM1062.0 1321.0V1313.2H1073.9V1321.0ZM1073.9 1321.0V1309.3H1089.6V1321.0ZM1089.6 1321.0V1309.3H1095.8V1321.0ZM1095.8 1321.0V1303.7H1118.0V1321.0ZM1118.0 1321.0V1303.7H1124.6V1321.0ZM1124.6 1321.0V1298.1H1148.0V1321.0ZM1148.0 1321.0V1298.1H1181.0V1321.0ZM1181.0 1321.0V1298.1H1186.3V1321.0ZM1186.3 1321.0V1292.4H1205.0V1321.0ZM1352.6 1321.0V1314.9H1370.9V1321.0ZM1370.9 1321.0V1309.3H1385.5V1321.0ZM1385.5 1321.0V1309.3H1391.5V1321.0ZM1391.5 1321.0V1303.7H1412.8V1321.0ZM1412.8 1321.0V1303.7H1420.6V1321.0ZM1420.6 1321.0V1298.1H1448.3V1321.0ZM1448.3 1321.0V1298.1H1456.6V1321.0ZM1456.6 1321.0V1292.4H1485.9V1321.0ZM1485.9 1321.0V1292.4H1494.4V1321.0ZM1494.4 1321.0V1286.8H1524.6V1321.0ZM1524.6 1321.0V1281.2H1528.3V1321.0ZM1675.6 1321.0V1303.7H1718.2V1321.0ZM1718.2 1321.0V1303.7H1728.2V1321.0ZM1728.2 1321.0V1298.1H1797.7V1321.0ZM1797.7 1321.0V1298.1H1831.4V1321.0ZM1831.4 1321.0V1292.4H1840.7V1321.0ZM1840.7 1321.0V1298.1H1850.8V1321.0ZM1850.8 1321.0V1298.1H1856.1V1321.0ZM1856.1 1321.0V1292.4H1875.0V1321.0ZM1853.5 1321.0V1286.8H1854.8V1321.0ZM1875.0 1321.0V1298.1H1966.0V1321.0ZM1966.0 1321.0V1298.1H2006.0V1321.0ZM2006.0 1321.0V1298.1H2048.6V1321.0ZM2048.6 1321.0V1298.1H2064.0V1321.0ZM2064.0 1321.0V1298.1H2077.8V1321.0ZM2077.8 1321.0V1286.8H2085.0V1321.0ZM2085.0 1321.0V1281.2H2087.0V1321.0ZM2087.0 1321.0V1286.8H2090.4V1321.0ZM2090.4 1321.0V1292.4H2107.0V1321.0ZM2107.0 1321.0V1292.4H2132.0V1321.0ZM2132.0 1321.0V1292.4H2142.0V1321.0ZM2142.0 1321.0V1286.8H2216.0V1321.0ZM2216.0 1321.0V1292.4H2227.7V1321.0ZM2227.7 1321.0V1298.1H2243.0V1321.0ZM2243.0 1321.0V1303.7H2313.7V1321.0ZM2313.7 1321.0V1298.1H2323.3V1321.0ZM2323.3 1321.0V1292.4H2328.5V1321.0ZM2328.5 1321.0V1286.8H2330.0V1321.0ZM2330.0 1321.0V1292.4H2334.7V1321.0ZM2334.7 1321.0V1298.1H2375.0V1321.0ZM2375.0 1321.0V1298.1H2415.5V1321.0Z" fill="#a2ecc4"/>
<path d="M174.07 1286.8V1281.2h1.12V1286.8ZM176.31 1286.8V1281.2h1.12V1286.8ZM179.67 1286.8V1281.2h1.12V1286.8ZM180.80 1286.8V1281.2h1.12V1286.8ZM181.92 1286.8V1281.2h1.12V1286.8ZM434.26 1298.1V1292.4h1.12V1298.1ZM456.69 1298.1V1292.4h1.12V1298.1ZM457.81 1298.1V1292.4h1.12V1298.1ZM486.97 1292.4V1286.8h1.12V1292.4ZM493.70 1292.4V1286.8h1.12V1292.4ZM494.82 1292.4V1286.8h1.12V1292.4ZM495.94 1292.4V1286.8h1.12V1292.4ZM507.16 1286.8V1281.2h1.12V1286.8ZM525.10 1286.8V1281.2h1.12V1286.8ZM531.83 1286.8V1281.2h1.12V1286.8ZM535.20 1286.8V1281.2h1.12V1286.8ZM541.93 1286.8V1281.2h1.12V1286.8ZM544.17 1286.8V1281.2h1.12V1286.8ZM547.53 1286.8V1281.2h1.12V1286.8ZM548.66 1286.8V1281.2h1.12V1286.8ZM549.78 1286.8V1281.2h1.12V1286.8ZM552.02 1286.8V1281.2h1.12V1286.8ZM553.14 1286.8V1281.2h1.12V1286.8ZM554.26 1286.8V1281.2h1.12V1286.8ZM555.39 1286.8V1281.2h1.12V1286.8ZM735.95 1303.7V1298.1h1.12V1303.7ZM737.07 1303.7V1298.1h1.12V1303.7ZM739.32 1303.7V1298.1h1.12V1303.7ZM742.68 1303.7V1298.1h1.12V1303.7ZM750.53 1303.7V1298.1h1.12V1303.7ZM756.14 1303.7V1298.1h1.12V1303.7ZM763.99 1298.1V1292.4h1.12V1298.1ZM768.48 1298.1V1292.4h1.12V1298.1ZM771.84 1303.7V1298.1h1.12V1303.7ZM772.96 1303.7V1298.1h1.12V1303.7ZM774.08 1303.7V1298.1h1.12V1303.7ZM779.69 1303.7V1298.1h1.12V1303.7ZM785.30 1303.7V1298.1h1.12V1303.7ZM792.03 1303.7V1298.1h1.12V1303.7ZM793.15 1303.7V1298.1h1.12V1303.7ZM803.24 1298.1V1292.4h1.12V1298.1ZM838.01 1298.1V1292.4h1.12V1298.1ZM840.25 1298.1V1292.4h1.12V1298.1ZM841.37 1298.1V1292.4h1.12V1298.1ZM842.50 1298.1V1292.4h1.12V1298.1ZM843.62 1298.1V1292.4h1.12V1298.1ZM844.74 1298.1V1292.4h1.12V1298.1ZM848.10 1292.4V1286.8h1.12V1292.4ZM1062.32 1314.9V1309.3h1.12V1314.9ZM1071.29 1314.9V1309.3h1.12V1314.9ZM1072.41 1314.9V1309.3h1.12V1314.9ZM1092.60 1309.3V1303.7h1.12V1309.3ZM1101.57 1303.7V1298.1h1.12V1303.7ZM1122.88 1303.7V1298.1h1.12V1303.7ZM1150.92 1298.1V1292.4h1.12V1298.1ZM1152.04 1298.1V1292.4h1.12V1298.1ZM1153.16 1298.1V1292.4h1.12V1298.1ZM1154.28 1298.1V1292.4h1.12V1298.1ZM1156.52 1298.1V1292.4h1.12V1298.1ZM1162.13 1298.1V1292.4h1.12V1298.1ZM1165.50 1298.1V1292.4h1.12V1298.1ZM1166.62 1298.1V1292.4h1.12V1298.1ZM1168.86 1298.1V1292.4h1.12V1298.1ZM1169.98 1298.1V1292.4h1.12V1298.1ZM1173.35 1298.1V1292.4h1.12V1298.1ZM1174.47 1298.1V1292.4h1.12V1298.1ZM1362.89 1314.9V1309.3h1.12V1314.9ZM1364.01 1314.9V1309.3h1.12V1314.9ZM1366.25 1314.9V1309.3h1.12V1314.9ZM1367.37 1314.9V1309.3h1.12V1314.9ZM1369.61 1314.9V1309.3h1.12V1314.9ZM1375.22 1309.3V1303.7h1.12V1309.3ZM1387.56 1309.3V1303.7h1.12V1309.3ZM1411.11 1303.7V1298.1h1.12V1303.7ZM1414.48 1303.7V1298.1h1.12V1303.7ZM1415.60 1303.7V1298.1h1.12V1303.7ZM1416.72 1303.7V1298.1h1.12V1303.7ZM1417.84 1303.7V1298.1h1.12V1303.7ZM1449.24 1298.1V1292.4h1.12V1298.1ZM1451.49 1298.1V1292.4h1.12V1298.1ZM1454.85 1298.1V1292.4h1.12V1298.1ZM1460.46 1292.4V1286.8h1.12V1292.4ZM1464.94 1292.4V1286.8h1.12V1292.4ZM1486.25 1292.4V1286.8h1.12V1292.4ZM1488.50 1292.4V1286.8h1.12V1292.4ZM1489.62 1292.4V1286.8h1.12V1292.4ZM1490.74 1292.4V1286.8h1.12V1292.4ZM1491.86 1292.4V1286.8h1.12V1292.4ZM1492.98 1292.4V1286.8h1.12V1292.4ZM1513.17 1286.8V1281.2h1.12V1286.8ZM1514.29 1286.8V1281.2h1.12V1286.8ZM1517.66 1286.8V1281.2h1.12V1286.8ZM1518.78 1286.8V1281.2h1.12V1286.8ZM1521.02 1286.8V1281.2h1.12V1286.8ZM1522.14 1286.8V1281.2h1.12V1286.8ZM1523.26 1286.8V1281.2h1.12V1286.8ZM1721.77 1303.7V1298.1h1.12V1303.7ZM1722.90 1303.7V1298.1h1.12V1303.7ZM1724.02 1303.7V1298.1h1.12V1303.7ZM1725.14 1303.7V1298.1h1.12V1303.7ZM1726.26 1303.7V1298.1h1.12V1303.7ZM1732.99 1298.1V1292.4h1.12V1298.1ZM1789.07 1298.1V1292.4h1.12V1298.1ZM1800.28 1298.1V1292.4h1.12V1298.1ZM1801.40 1298.1V1292.4h1.12V1298.1ZM1802.52 1298.1V1292.4h1.12V1298.1ZM1804.77 1298.1V1292.4h1.12V1298.1ZM1808.13 1298.1V1292.4h1.12V1298.1ZM1809.25 1298.1V1292.4h1.12V1298.1ZM1814.86 1298.1V1292.4h1.12V1298.1ZM1815.98 1298.1V1292.4h1.12V1298.1ZM1819.35 1298.1V1292.4h1.12V1298.1ZM1820.47 1298.1V1292.4h1.12V1298.1ZM1821.59 1298.1V1292.4h1.12V1298.1ZM1822.71 1298.1V1292.4h1.12V1298.1ZM1823.83 1298.1V1292.4h1.12V1298.1ZM1824.95 1298.1V1292.4h1.12V1298.1ZM1826.08 1298.1V1292.4h1.12V1298.1ZM1827.20 1298.1V1292.4h1.12V1298.1ZM1828.32 1298.1V1292.4h1.12V1298.1ZM1829.44 1298.1V1292.4h1.12V1298.1ZM1832.81 1292.4V1286.8h1.12V1292.4ZM1839.53 1292.4V1286.8h1.12V1292.4ZM1841.78 1298.1V1292.4h1.12V1298.1ZM1842.90 1298.1V1292.4h1.12V1298.1ZM1846.26 1298.1V1292.4h1.12V1298.1ZM1847.39 1298.1V1292.4h1.12V1298.1ZM1848.51 1298.1V1292.4h1.12V1298.1ZM1903.46 1298.1V1292.4h1.12V1298.1ZM1925.89 1298.1V1292.4h1.12V1298.1ZM1968.51 1298.1V1292.4h1.12V1298.1ZM1971.87 1298.1V1292.4h1.12V1298.1ZM1976.36 1298.1V1292.4h1.12V1298.1ZM1981.97 1298.1V1292.4h1.12V1298.1ZM1983.09 1298.1V1292.4h1.12V1298.1ZM1984.21 1298.1V1292.4h1.12V1298.1ZM1986.45 1298.1V1292.4h1.12V1298.1ZM1990.94 1298.1V1292.4h1.12V1298.1ZM1994.31 1298.1V1292.4h1.12V1298.1ZM1995.43 1298.1V1292.4h1.12V1298.1ZM2001.03 1298.1V1292.4h1.12V1298.1ZM2004.40 1298.1V1292.4h1.12V1298.1ZM2023.47 1298.1V1292.4h1.12V1298.1ZM2024.59 1298.1V1292.4h1.12V1298.1ZM2052.62 1298.1V1292.4h1.12V1298.1ZM2055.99 1298.1V1292.4h1.12V1298.1ZM2061.60 1298.1V1292.4h1.12V1298.1ZM2064.96 1298.1V1292.4h1.12V1298.1ZM2067.20 1298.1V1292.4h1.12V1298.1ZM2068.33 1298.1V1292.4h1.12V1298.1ZM2069.45 1298.1V1292.4h1.12V1298.1ZM2070.57 1298.1V1292.4h1.12V1298.1ZM2071.69 1298.1V1292.4h1.12V1298.1ZM2072.81 1298.1V1292.4h1.12V1298.1ZM2075.06 1298.1V1292.4h1.12V1298.1ZM2082.91 1286.8V1281.2h1.12V1286.8ZM2090.76 1292.4V1286.8h1.12V1292.4ZM2112.07 1292.4V1286.8h1.12V1292.4ZM2118.80 1292.4V1286.8h1.12V1292.4ZM2121.04 1292.4V1286.8h1.12V1292.4ZM2127.77 1292.4V1286.8h1.12V1292.4ZM2128.89 1292.4V1286.8h1.12V1292.4ZM2130.01 1292.4V1286.8h1.12V1292.4ZM2132.25 1292.4V1286.8h1.12V1292.4ZM2133.38 1292.4V1286.8h1.12V1292.4ZM2135.62 1292.4V1286.8h1.12V1292.4ZM2136.74 1292.4V1286.8h1.12V1292.4ZM2137.86 1292.4V1286.8h1.12V1292.4ZM2140.10 1292.4V1286.8h1.12V1292.4ZM2223.10 1292.4V1286.8h1.12V1292.4ZM2244.41 1303.7V1298.1h1.12V1303.7ZM2245.53 1303.7V1298.1h1.12V1303.7ZM2248.89 1303.7V1298.1h1.12V1303.7ZM2250.01 1303.7V1298.1h1.12V1303.7ZM2255.62 1303.7V1298.1h1.12V1303.7ZM2264.59 1303.7V1298.1h1.12V1303.7ZM2283.66 1303.7V1298.1h1.12V1303.7ZM2288.15 1303.7V1298.1h1.12V1303.7ZM2290.39 1303.7V1298.1h1.12V1303.7ZM2299.36 1303.7V1298.1h1.12V1303.7ZM2300.48 1303.7V1298.1h1.12V1303.7ZM2301.60 1303.7V1298.1h1.12V1303.7ZM2302.73 1303.7V1298.1h1.12V1303.7ZM2304.97 1303.7V1298.1h1.12V1303.7ZM2306.09 1303.7V1298.1h1.12V1303.7ZM2307.21 1303.7V1298.1h1.12V1303.7ZM2308.33 1303.7V1298.1h1.12V1303.7ZM2311.70 1303.7V1298.1h1.12V1303.7ZM2315.06 1298.1V1292.4h1.12V1298.1ZM2319.55 1298.1V1292.4h1.12V1298.1ZM2320.67 1298.1V1292.4h1.12V1298.1ZM2321.79 1298.1V1292.4h1.12V1298.1ZM2335.25 1298.1V1292.4h1.12V1298.1ZM2336.37 1298.1V1292.4h1.12V1298.1ZM2339.74 1298.1V1292.4h1.12V1298.1ZM2340.86 1298.1V1292.4h1.12V1298.1ZM2345.34 1298.1V1292.4h1.12V1298.1ZM2347.59 1298.1V1292.4h1.12V1298.1ZM2353.19 1298.1V1292.4h1.12V1298.1ZM2355.44 1298.1V1292.4h1.12V1298.1ZM2363.29 1298.1V1292.4h1.12V1298.1ZM2364.41 1298.1V1292.4h1.12V1298.1ZM2365.53 1298.1V1292.4h1.12V1298.1ZM2372.26 1298.1V1292.4h1.12V1298.1ZM2375.62 1298.1V1292.4h1.12V1298.1ZM2376.75 1298.1V1292.4h1.12V1298.1ZM2380.11 1298.1V1292.4h1.12V1298.1ZM2381.23 1298.1V1292.4h1.12V1298.1ZM2382.35 1298.1V1292.4h1.12V1298.1ZM2384.60 1298.1V1292.4h1.12V1298.1ZM2385.72 1298.1V1292.4h1.12V1298.1ZM2386.84 1298.1V1292.4h1.12V1298.1ZM2389.08 1298.1V1292.4h1.12V1298.1ZM2390.20 1298.1V1292.4h1.12V1298.1ZM2391.33 1298.1V1292.4h1.12V1298.1ZM2392.45 1298.1V1292.4h1.12V1298.1ZM2394.69 1298.1V1292.4h1.12V1298.1ZM2395.81 1298.1V1292.4h1.12V1298.1ZM2396.93 1298.1V1292.4h1.12V1298.1ZM2398.06 1298.1V1292.4h1.12V1298.1ZM2399.18 1298.1V1292.4h1.12V1298.1ZM2400.30 1298.1V1292.4h1.12V1298.1ZM2401.42 1298.1V1292.4h1.12V1298.1ZM2402.54 1298.1V1292.4h1.12V1298.1ZM2403.66 1298.1V1292.4h1.12V1298.1ZM2404.78 1298.1V1292.4h1.12V1298.1ZM2405.91 1298.1V1292.4h1.12V1298.1ZM2407.03 1298.1V1292.4h1.12V1298.1ZM2408.15 1298.1V1292.4h1.12V1298.1ZM2409.27 1298.1V1292.4h1.12V1298.1ZM2411.51 1298.1V1292.4h1.12V1298.1ZM2412.64 1298.1V1292.4h1.12V1298.1Z" fill="#a2ecc4"/>
<path d="M237.1 1321.0V1275.6H260.9V1321.0ZM260.9 1321.0V1281.2H285.6V1321.0ZM285.6 1321.0V1286.8H292.0V1321.0ZM292.0 1321.0V1292.4H304.9V1321.0ZM304.9 1321.0V1298.1H320.5V1321.0ZM320.5 1321.0V1303.7H327.0V1321.0ZM327.0 1321.0V1298.1H331.0V1321.0ZM331.0 1321.0V1292.4H333.0V1321.0ZM333.0 1321.0V1298.1H339.5V1321.0ZM339.5 1321.0V1292.4H341.5V1321.0ZM341.5 1321.0V1303.7H365.5V1321.0ZM365.5 1321.0V1298.1H367.5V1321.0ZM367.5 1321.0V1303.7H384.2V1321.0ZM560.3 1321.0V1175.1H563.1V1321.0ZM563.1 1321.0V1214.0H572.9V1321.0ZM572.9 1321.0V1208.3H575.6V1321.0ZM575.6 1321.0V1181.2H576.6V1321.0ZM576.6 1321.0V1142.2H578.0V1321.0ZM578.0 1321.0V1035.4H580.7V1321.0ZM580.6 1321.0V995.7H582.5V1321.0ZM582.4 1321.0V1012.7H584.7V1321.0ZM584.7 1321.0V1157.4H586.8V1321.0ZM586.8 1321.0V967.6H588.1V1321.0ZM588.1 1321.0V939.4H590.2V1321.0ZM590.2 1321.0V1023.5H591.9V1321.0ZM591.8 1321.0V989.6H593.7V1321.0ZM593.6 1321.0V1084.5H594.9V1321.0ZM594.8 1321.0V967.6H596.7V1321.0ZM596.6 1321.0V1091.3H598.3V1321.0ZM598.3 1321.0V1181.2H600.3V1321.0ZM600.3 1321.0V1018.4H602.4V1321.0ZM602.4 1321.0V1074.4H604.4V1321.0ZM604.4 1321.0V1193.0H606.1V1321.0ZM606.1 1321.0V1216.8H607.8V1321.0ZM607.8 1321.0V1135.4H609.2V1321.0ZM608.7 1321.0V826.9H610.6V1321.0ZM610.2 1321.0V1057.4H611.9V1321.0ZM611.9 1321.0V1152.3H614.6V1321.0ZM614.6 1321.0V1157.4H616.3V1321.0ZM616.2 1321.0V1152.3H618.1V1321.0ZM618.0 1321.0V1162.5H619.0V1321.0ZM619.0 1321.0V1118.4H620.7V1321.0ZM620.7 1321.0V1101.5H622.4V1321.0ZM622.4 1321.0V1040.5H623.4V1321.0ZM622.9 1321.0V1012.7H624.8V1321.0ZM624.4 1321.0V1045.5H627.5V1321.0ZM627.5 1321.0V1135.4H629.2V1321.0ZM629.2 1321.0V1090.6H631.5V1321.0ZM631.5 1321.0V1130.3H634.9V1321.0ZM634.9 1321.0V1186.2H636.3V1321.0ZM636.3 1321.0V1232.0H650.2V1321.0ZM650.2 1321.0V1215.1H652.9V1321.0ZM652.9 1321.0V1197.1H655.3V1321.0ZM655.3 1321.0V1186.2H657.6V1321.0ZM657.5 1321.0V1164.2H659.4V1321.0ZM659.3 1321.0V1176.1H661.4V1321.0ZM661.4 1321.0V1204.9H666.1V1321.0ZM666.1 1321.0V1203.2H668.1V1321.0ZM668.1 1321.0V1208.3H670.5V1321.0ZM670.5 1321.0V1169.3H671.9V1321.0ZM671.6 1321.0V1068.6H673.5V1321.0ZM673.2 1321.0V1118.4H674.6V1321.0ZM674.6 1321.0V1176.1H675.9V1321.0ZM675.8 1321.0V1164.2H677.7V1321.0ZM677.6 1321.0V1203.2H679.7V1321.0ZM679.7 1321.0V1208.3H684.1V1321.0ZM683.6 1321.0V1169.3H685.5V1321.0ZM685.1 1321.0V1174.4H686.8V1321.0ZM686.8 1321.0V1208.3H688.1V1321.0ZM688.1 1321.0V1242.2H689.5V1321.0ZM689.5 1321.0V1298.1H690.8V1321.0ZM690.8 1321.0V1303.9H706.8V1321.0ZM882.3 1321.0V1281.2H883.3V1321.0ZM883.3 1321.0V1208.3H884.7V1321.0ZM884.4 1321.0V1175.1H886.3V1321.0ZM886.1 1321.0V1191.3H887.4V1321.0ZM887.4 1321.0V1225.2H888.8V1321.0ZM888.8 1321.0V1219.5H897.6V1321.0ZM897.6 1321.0V1152.3H898.9V1321.0ZM898.9 1321.0V1141.5H900.3V1321.0ZM900.3 1321.0V1045.5H901.6V1321.0ZM901.4 1321.0V1024.2H903.3V1321.0ZM903.0 1321.0V1096.4H904.7V1321.0ZM904.4 1321.0V1018.4H906.3V1321.0ZM906.1 1321.0V1108.3H907.7V1321.0ZM907.7 1321.0V1174.4H909.1V1321.0ZM909.1 1321.0V1157.4H910.5V1321.0ZM910.5 1321.0V1141.5H912.2V1321.0ZM912.2 1321.0V1079.4H913.5V1321.0ZM913.5 1321.0V1024.2H914.9V1321.0ZM914.6 1321.0V956.4H916.5V1321.0ZM916.2 1321.0V1108.3H917.6V1321.0ZM917.6 1321.0V1169.3H918.9V1321.0ZM918.9 1321.0V1186.2H920.6V1321.0ZM920.6 1321.0V1208.3H922.0V1321.0ZM922.0 1321.0V1225.2H924.0V1321.0ZM923.7 1321.0V1220.1H925.6V1321.0ZM925.4 1321.0V1230.3H926.7V1321.0ZM926.5 1321.0V1220.1H928.4V1321.0ZM928.1 1321.0V1225.2H929.4V1321.0ZM929.4 1321.0V1181.2H930.8V1321.0ZM930.8 1321.0V1141.5H931.8V1321.0ZM931.5 1321.0V1057.4H933.4V1321.0ZM933.2 1321.0V1102.2H934.5V1321.0ZM934.5 1321.0V1176.1H936.2V1321.0ZM936.2 1321.0V1181.2H937.9V1321.0ZM937.9 1321.0V1186.2H939.3V1321.0ZM939.3 1321.0V1225.2H940.6V1321.0ZM940.6 1321.0V1232.0H943.3V1321.0ZM943.3 1321.0V1191.3H944.7V1321.0ZM944.7 1321.0V1164.2H947.7V1321.0ZM947.7 1321.0V1197.1H949.1V1321.0ZM949.0 1321.0V1085.2H950.9V1321.0ZM950.8 1321.0V1152.3H952.2V1321.0ZM952.2 1321.0V1169.3H953.8V1321.0ZM953.8 1321.0V1197.1H955.2V1321.0ZM955.2 1321.0V1233.7H961.3V1321.0ZM961.3 1321.0V1225.2H965.7V1321.0ZM965.7 1321.0V1220.1H968.1V1321.0ZM968.1 1321.0V1225.2H975.9V1321.0ZM975.9 1321.0V1220.1H977.2V1321.0ZM977.2 1321.0V1068.6H978.6V1321.0ZM978.5 1321.0V1012.7H980.4V1321.0ZM980.3 1321.0V1186.2H981.6V1321.0ZM981.6 1321.0V1203.2H983.3V1321.0ZM983.3 1321.0V1208.3H986.7V1321.0ZM986.7 1321.0V1203.2H991.1V1321.0ZM991.1 1321.0V1197.1H992.8V1321.0ZM992.8 1321.0V1164.2H995.2V1321.0ZM995.2 1321.0V1158.4H997.2V1321.0ZM997.2 1321.0V1169.3H998.6V1321.0ZM998.5 1321.0V1152.3H1000.4V1321.0ZM1000.3 1321.0V1214.0H1002.0V1321.0ZM1002.0 1321.0V1220.1H1004.0V1321.0ZM1004.0 1321.0V1203.2H1005.4V1321.0ZM1005.3 1321.0V1169.3H1007.2V1321.0ZM1007.1 1321.0V1208.3H1008.4V1321.0ZM1008.4 1321.0V1303.9H1015.5V1321.0ZM1015.5 1321.0V1309.3H1029.8V1321.0ZM1205.0 1321.0V1259.1H1206.3V1321.0ZM1206.3 1321.0V1208.3H1207.7V1321.0ZM1207.4 1321.0V1175.1H1209.3V1321.0ZM1209.1 1321.0V1203.2H1210.4V1321.0ZM1210.4 1321.0V1219.5H1219.2V1321.0ZM1219.2 1321.0V1225.2H1220.9V1321.0ZM1220.9 1321.0V1214.0H1222.6V1321.0ZM1222.6 1321.0V1203.2H1224.3V1321.0ZM1224.3 1321.0V1158.4H1225.7V1321.0ZM1225.7 1321.0V1040.5H1227.0V1321.0ZM1227.0 1321.0V1012.7H1228.4V1321.0ZM1228.3 1321.0V995.7H1230.2V1321.0ZM1230.1 1321.0V1080.1H1231.8V1321.0ZM1231.8 1321.0V1158.4H1233.5V1321.0ZM1233.5 1321.0V1175.1H1235.2V1321.0ZM1235.2 1321.0V1186.2H1236.5V1321.0ZM1236.2 1321.0V1147.3H1238.1V1321.0ZM1237.9 1321.0V1158.4H1239.6V1321.0ZM1239.5 1321.0V1136.1H1241.4V1321.0ZM1241.3 1321.0V1169.3H1242.9V1321.0ZM1242.9 1321.0V1181.2H1244.3V1321.0ZM1244.3 1321.0V1197.1H1256.5V1321.0ZM1256.5 1321.0V1203.2H1261.3V1321.0ZM1261.3 1321.0V1214.0H1262.9V1321.0ZM1262.9 1321.0V1233.7H1266.3V1321.0ZM1266.3 1321.0V1108.3H1267.7V1321.0ZM1267.6 1321.0V1090.6H1269.5V1321.0ZM1269.4 1321.0V1136.1H1270.7V1321.0ZM1270.7 1321.0V1220.1H1272.1V1321.0ZM1272.1 1321.0V1235.4H1273.5V1321.0ZM1273.5 1321.0V1225.2H1274.8V1321.0ZM1274.8 1321.0V1164.2H1278.2V1321.0ZM1278.2 1321.0V1181.2H1280.6V1321.0ZM1280.6 1321.0V1197.1H1282.3V1321.0ZM1282.3 1321.0V1225.2H1283.6V1321.0ZM1283.6 1321.0V1214.0H1285.3V1321.0ZM1285.3 1321.0V1197.1H1287.0V1321.0ZM1287.0 1321.0V1191.3H1291.1V1321.0ZM1291.1 1321.0V1197.1H1293.5V1321.0ZM1293.5 1321.0V1203.2H1298.9V1321.0ZM1298.9 1321.0V1197.1H1300.6V1321.0ZM1300.6 1321.0V1191.3H1301.9V1321.0ZM1301.9 1321.0V1080.1H1303.3V1321.0ZM1303.2 1321.0V1040.5H1305.1V1321.0ZM1305.0 1321.0V1045.5H1306.0V1321.0ZM1305.7 1321.0V950.6H1307.6V1321.0ZM1307.4 1321.0V1063.2H1308.7V1321.0ZM1308.7 1321.0V1181.2H1310.1V1321.0ZM1310.1 1321.0V1203.2H1311.4V1321.0ZM1311.4 1321.0V1214.0H1314.1V1321.0ZM1314.1 1321.0V1208.3H1315.8V1321.0ZM1315.8 1321.0V1186.2H1317.2V1321.0ZM1317.2 1321.0V1164.2H1319.2V1321.0ZM1319.2 1321.0V1169.3H1321.6V1321.0ZM1321.6 1321.0V1175.1H1323.3V1321.0ZM1323.3 1321.0V1208.3H1325.0V1321.0ZM1325.0 1321.0V1191.3H1326.3V1321.0ZM1326.3 1321.0V1125.2H1328.4V1321.0ZM1328.3 1321.0V1057.4H1330.2V1321.0ZM1330.1 1321.0V1108.3H1331.4V1321.0ZM1331.4 1321.0V1186.2H1332.4V1321.0ZM1332.4 1321.0V1220.1H1333.8V1321.0ZM1333.8 1321.0V1271.0H1335.2V1321.0ZM1335.2 1321.0V1288.0H1336.8V1321.0ZM1336.8 1321.0V1303.9H1339.2V1321.0ZM1339.2 1321.0V1309.3H1341.3V1321.0ZM1341.3 1321.0V1315.8H1352.8V1321.0ZM1528.3 1321.0V1220.1H1529.7V1321.0ZM1529.7 1321.0V1197.1H1531.0V1321.0ZM1530.8 1321.0V1164.2H1532.7V1321.0ZM1532.4 1321.0V1203.2H1533.7V1321.0ZM1533.7 1321.0V1206.6H1536.1V1321.0ZM1536.1 1321.0V1209.0H1541.2V1321.0ZM1541.2 1321.0V1203.2H1542.9V1321.0ZM1542.9 1321.0V1152.3H1544.3V1321.0ZM1544.3 1321.0V1136.1H1545.6V1321.0ZM1545.6 1321.0V1074.4H1547.0V1321.0ZM1547.0 1321.0V1024.2H1548.7V1321.0ZM1548.6 1321.0V1012.7H1550.5V1321.0ZM1550.4 1321.0V1119.1H1551.7V1321.0ZM1551.7 1321.0V1206.6H1553.1V1321.0ZM1553.1 1321.0V1203.2H1555.1V1321.0ZM1555.1 1321.0V1209.0H1557.1V1321.0ZM1557.1 1321.0V1214.0H1562.6V1321.0ZM1562.6 1321.0V1203.2H1563.9V1321.0ZM1563.8 1321.0V1024.2H1565.7V1321.0ZM1565.6 1321.0V1219.5H1567.3V1321.0ZM1567.3 1321.0V1203.2H1569.3V1321.0ZM1569.1 1321.0V1057.4H1571.0V1321.0ZM1570.7 1321.0V1181.2H1572.4V1321.0ZM1572.4 1321.0V1219.5H1575.8V1321.0ZM1575.8 1321.0V1223.5H1577.8V1321.0ZM1577.8 1321.0V1181.2H1579.2V1321.0ZM1578.9 1321.0V1113.3H1580.8V1321.0ZM1580.5 1321.0V1191.3H1582.2V1321.0ZM1582.2 1321.0V1197.1H1583.9V1321.0ZM1583.9 1321.0V1158.4H1585.3V1321.0ZM1585.0 1321.0V1001.5H1586.9V1321.0ZM1586.6 1321.0V1091.3H1588.0V1321.0ZM1587.9 1321.0V1046.2H1589.8V1321.0ZM1589.7 1321.0V1074.4H1591.4V1321.0ZM1591.4 1321.0V990.3H1593.7V1321.0ZM1593.7 1321.0V1181.2H1595.1V1321.0ZM1595.1 1321.0V1197.1H1596.5V1321.0ZM1596.5 1321.0V1208.3H1598.2V1321.0ZM1598.2 1321.0V1214.0H1599.8V1321.0ZM1599.8 1321.0V1225.2H1601.9V1321.0ZM1601.9 1321.0V1203.2H1603.2V1321.0ZM1603.1 1321.0V1186.2H1605.0V1321.0ZM1604.9 1321.0V1191.3H1606.3V1321.0ZM1606.3 1321.0V1247.3H1607.6V1321.0ZM1607.6 1321.0V1257.4H1610.7V1321.0ZM1610.6 1321.0V1247.9H1612.5V1321.0ZM1612.4 1321.0V1259.1H1614.4V1321.0ZM1614.3 1321.0V1254.0H1616.2V1321.0ZM1616.1 1321.0V1259.1H1617.8V1321.0ZM1617.8 1321.0V1237.1H1619.2V1321.0ZM1619.2 1321.0V1141.5H1620.5V1321.0ZM1620.4 1321.0V1080.1H1622.3V1321.0ZM1622.2 1321.0V1181.2H1623.6V1321.0ZM1623.6 1321.0V1225.2H1625.3V1321.0ZM1625.3 1321.0V1232.0H1627.0V1321.0ZM1627.0 1321.0V1242.2H1628.7V1321.0ZM1628.7 1321.0V1264.2H1630.0V1321.0ZM1629.9 1321.0V1191.3H1631.8V1321.0ZM1631.7 1321.0V1236.4H1636.5V1321.0ZM1636.5 1321.0V1203.2H1638.5V1321.0ZM1638.5 1321.0V1191.3H1640.5V1321.0ZM1640.5 1321.0V1175.1H1642.9V1321.0ZM1642.9 1321.0V1203.2H1644.6V1321.0ZM1644.6 1321.0V1237.1H1646.3V1321.0ZM1646.3 1321.0V1243.9H1648.0V1321.0ZM1648.0 1321.0V1259.1H1649.7V1321.0ZM1649.7 1321.0V1191.3H1654.1V1321.0ZM1654.1 1321.0V1214.0H1655.4V1321.0ZM1655.4 1321.0V1236.4H1658.2V1321.0ZM1658.2 1321.0V1259.1H1659.5V1321.0ZM1659.5 1321.0V1293.0H1660.9V1321.0ZM1660.9 1321.0V1303.9H1675.8V1321.0Z" fill="#259170"/>
<rect x="153.8" y="815.5" width="2.2" height="506.7" fill="#6e6e6e"/>
<rect x="153.8" y="1320.9" width="2263.4" height="1.3" fill="#7c7c7c"/>
<rect x="142.5" y="1319.80" width="12" height="1.4" fill="#a8a8a8"/>
<text x="121.20" y="1326.90" font-size="18.7" fill="#444" textLength="11.8" lengthAdjust="spacingAndGlyphs">0</text>
<rect x="142.5" y="1263.69" width="12" height="1.4" fill="#a8a8a8"/>
<text x="109.40" y="1270.79" font-size="18.7" fill="#444" textLength="23.6" lengthAdjust="spacingAndGlyphs">10</text>
<rect x="142.5" y="1207.58" width="12" height="1.4" fill="#a8a8a8"/>
<text x="109.40" y="1214.68" font-size="18.7" fill="#444" textLength="23.6" lengthAdjust="spacingAndGlyphs">20</text>
<rect x="142.5" y="1151.47" width="12" height="1.4" fill="#a8a8a8"/>
<text x="109.40" y="1158.57" font-size="18.7" fill="#444" textLength="23.6" lengthAdjust="spacingAndGlyphs">30</text>
<rect x="142.5" y="1095.36" width="12" height="1.4" fill="#a8a8a8"/>
<text x="109.40" y="1102.46" font-size="18.7" fill="#444" textLength="23.6" lengthAdjust="spacingAndGlyphs">40</text>
<rect x="142.5" y="1039.24" width="12" height="1.4" fill="#a8a8a8"/>
<text x="109.40" y="1046.34" font-size="18.7" fill="#444" textLength="23.6" lengthAdjust="spacingAndGlyphs">50</text>
<rect x="142.5" y="983.13" width="12" height="1.4" fill="#a8a8a8"/>
<text x="109.40" y="990.23" font-size="18.7" fill="#444" textLength="23.6" lengthAdjust="spacingAndGlyphs">60</text>
<rect x="142.5" y="927.02" width="12" height="1.4" fill="#a8a8a8"/>
<text x="109.40" y="934.12" font-size="18.7" fill="#444" textLength="23.6" lengthAdjust="spacingAndGlyphs">70</text>
<rect x="142.5" y="870.91" width="12" height="1.4" fill="#a8a8a8"/>
<text x="109.40" y="878.01" font-size="18.7" fill="#444" textLength="23.6" lengthAdjust="spacingAndGlyphs">80</text>
<rect x="142.5" y="814.80" width="12" height="1.4" fill="#a8a8a8"/>
<text x="109.40" y="821.90" font-size="18.7" fill="#444" textLength="23.6" lengthAdjust="spacingAndGlyphs">90</text>
<rect x="154.90" y="1322.4" width="1.5" height="10" fill="#a4a4a4"/>
<text x="121.00" y="1356.8" font-size="19" fill="#222" textLength="69" lengthAdjust="spacingAndGlyphs">lun. 06</text>
<rect x="477.90" y="1322.4" width="1.5" height="10" fill="#a4a4a4"/>
<text x="441.00" y="1356.8" font-size="19" fill="#222" textLength="75" lengthAdjust="spacingAndGlyphs">mar. 07</text>
<rect x="800.90" y="1322.4" width="1.5" height="10" fill="#a4a4a4"/>
<text x="764.00" y="1356.8" font-size="19" fill="#222" textLength="75" lengthAdjust="spacingAndGlyphs">mer. 08</text>
<rect x="1123.90" y="1322.4" width="1.5" height="10" fill="#a4a4a4"/>
<text x="1089.50" y="1356.8" font-size="19" fill="#222" textLength="70" lengthAdjust="spacingAndGlyphs">jeu. 09</text>
<rect x="1446.90" y="1322.4" width="1.5" height="10" fill="#a4a4a4"/>
<text x="1410.50" y="1356.8" font-size="19" fill="#222" textLength="74" lengthAdjust="spacingAndGlyphs">ven. 10</text>
<rect x="1769.90" y="1322.4" width="1.5" height="10" fill="#a4a4a4"/>
<text x="1731.00" y="1356.8" font-size="19" fill="#222" textLength="79" lengthAdjust="spacingAndGlyphs">sam. 11</text>
<rect x="2092.90" y="1322.4" width="1.5" height="10" fill="#a4a4a4"/>
<text x="2056.00" y="1356.8" font-size="19" fill="#222" textLength="75" lengthAdjust="spacingAndGlyphs">dim. 12</text>
<text transform="translate(85.5,1067) rotate(-90)" text-anchor="middle" font-size="20" fill="#444" textLength="30" lengthAdjust="spacingAndGlyphs">kW</text>
</g>
<g id="banner" filter="url(#b1)">
<rect x="176.4" y="49" width="481.5" height="77.6" fill="#0a0a18"/>
<g transform="translate(176,48) scale(0.09558)" fill="none" stroke-linecap="round" stroke-linejoin="round">
<g stroke="url(#eco)" stroke-width="70">
<path d="M175 482H375A105 130 0 1 0 358 578"/>
<path d="M245 277L300 247" stroke="#00efcb" stroke-width="62"/>
<path d="M652 400A107 130 0 1 0 652 582"/>
<ellipse cx="850" cy="490" rx="110" ry="130"/>
</g>
<g stroke="#ffffff" stroke-width="68">
<path d="M1040 415L1122 620L1205 355L1290 620L1440 212"/>
<ellipse cx="1555" cy="548" rx="100" ry="74"/>
<path d="M1478 395Q1560 335 1635 378Q1668 400 1668 455V622"/>
<path d="M1785 277V560Q1785 625 1850 625"/>
<path d="M1940 277V560Q1940 628 2010 630"/>
<path d="M1745 352H2040" stroke-width="60"/>
</g></g>
<ellipse cx="433.9" cy="89.1" rx="25.7" ry="27.8" fill="#00b4e4"/>
<text x="418.6" y="96.6" font-size="24.5" fill="#ffffff" textLength="32" lengthAdjust="spacingAndGlyphs">Rte</text>
<rect x="427" y="88.3" width="23.6" height="1.4" fill="#ffffff" opacity="0.92"/>
<text x="468.3" y="78.5" font-size="11.8" fill="#00a2d6" stroke="#00a2d6" stroke-width="0.35" textLength="48.2" lengthAdjust="spacingAndGlyphs">Le réseau</text>
<text x="468.3" y="92.0" font-size="11.8" fill="#00a2d6" stroke="#00a2d6" stroke-width="0.35" textLength="61.1" lengthAdjust="spacingAndGlyphs">de transport</text>
<text x="468.3" y="105.3" font-size="11.8" fill="#00a2d6" stroke="#00a2d6" stroke-width="0.35" textLength="57.0" lengthAdjust="spacingAndGlyphs">d’électricité</text>
<rect x="546.5" y="61.3" width="100.8" height="55.6" fill="#ffffff"/>
<rect x="553.2" y="68.7" width="7.8" height="6.7" fill="#27348b"/>
<rect x="564.1" y="68.7" width="7.8" height="6.7" fill="#e1000f"/>
<path d="M561 68.7h3.1v6.7h-3.1z" fill="#f4f4f8"/>
<text x="553" y="84.9" font-size="8" font-weight="bold" fill="#2a2a2a" textLength="43.2" lengthAdjust="spacingAndGlyphs">RÉPUBLIQUE</text>
<text x="553" y="93.1" font-size="8" font-weight="bold" fill="#2a2a2a" textLength="40.6" lengthAdjust="spacingAndGlyphs">FRANÇAISE</text>
<text x="553" y="99.9" font-size="3.4" font-style="italic" fill="#555" textLength="11.6" lengthAdjust="spacingAndGlyphs">Liberté</text>
<text x="553" y="104.8" font-size="3.4" font-style="italic" fill="#555" textLength="11.6" lengthAdjust="spacingAndGlyphs">Égalité</text>
<text x="553" y="109.7" font-size="3.4" font-style="italic" fill="#555" textLength="16.8" lengthAdjust="spacingAndGlyphs">Fraternité</text>
<rect x="607.1" y="66.9" width="34.7" height="44.3" fill="#ffffff" stroke="#4a7fd0" stroke-width="1.1"/>
<rect x="608.6" y="68.4" width="31.7" height="41.3" fill="none" stroke="#a9c3ea" stroke-width="0.6"/>
<text x="611.7" y="74.8" font-size="6.3" font-weight="bold" fill="#e2231a" textLength="25.4" lengthAdjust="spacingAndGlyphs">ADEME</text>
<circle cx="624.2" cy="87.1" r="8.8" fill="#1d4fb2"/>
<path d="M621 80.5q3-1.5 4.5.5q-2 1.2-1 3q1.6 1 .6 3q-1.5 2.5-.5 5q-2-.5-2.6-3q-.4-2-2-2.4q-1.5-2 .2-3.6z" fill="#8fa8e0"/>
<path d="M627.5 84q2-.4 3 1.2q.6 2-1 3.4q-1.6.2-2-1.6z" fill="#8fa8e0"/>
<text x="611.7" y="101.8" font-size="3.1" fill="#e2231a" opacity="0.85" textLength="25.4" lengthAdjust="spacingAndGlyphs">AGENCE DE LA</text>
<text x="611.7" y="105.2" font-size="3.1" fill="#e2231a" opacity="0.85" textLength="25.4" lengthAdjust="spacingAndGlyphs">TRANSITION</text>
<text x="611.7" y="108.9" font-size="3.1" fill="#e2231a" opacity="0.85" textLength="25.4" lengthAdjust="spacingAndGlyphs">ÉCOLOGIQUE</text>
</g>
<g id="jtable">
<g fill="#d9d9d9">
<rect x="169.3" y="135.5" width="491.9" height="3.4"/>
<rect x="169.3" y="253.1" width="491.9" height="5.6"/>
<rect x="169.3" y="189.0" width="491.9" height="5.6"/>
<rect x="169.3" y="135.5" width="3.5" height="123.2"/>
<rect x="655.5" y="135.5" width="5.7" height="123.2"/>
<rect x="288.7" y="135.5" width="5.7" height="123.2"/>
<rect x="411.5" y="135.5" width="5.4" height="123.2"/>
<rect x="533.3" y="135.5" width="5.6" height="123.2"/>
</g>
<svg x="180.3" y="195.2" width="105.7" height="54.8" viewBox="0 0 747 390" preserveAspectRatio="none">
<rect width="747" height="390" fill="url(#tg)"/>
<path d="M122 0C230 70 340 170 512 175C620 178 700 140 747 115V0Z" fill="#00efcb"/>
<path d="M202 0C300 40 400 72 502 72C610 72 700 35 747 10V0Z" fill="#00a58c"/>
</svg>
<svg x="302.4" y="196.2" width="105.9" height="55.6" viewBox="0 0 747 390" preserveAspectRatio="none">
<rect width="747" height="390" fill="url(#tg)"/>
<path d="M122 0C230 70 340 170 512 175C620 178 700 140 747 115V0Z" fill="#00efcb"/>
<path d="M202 0C300 40 400 72 502 72C610 72 700 35 747 10V0Z" fill="#00a58c"/>
</svg>
<svg x="424.1" y="196.2" width="105.9" height="55.6" viewBox="0 0 747 390" preserveAspectRatio="none">
<rect width="747" height="390" fill="url(#tg)"/>
<path d="M122 0C230 70 340 170 512 175C620 178 700 140 747 115V0Z" fill="#00efcb"/>
<path d="M202 0C300 40 400 72 502 72C610 72 700 35 747 10V0Z" fill="#00a58c"/>
</svg>
<svg x="544.1" y="196.2" width="106.2" height="55.6" viewBox="0 0 747 390" preserveAspectRatio="none">
<rect width="747" height="390" fill="url(#tg)"/>
<path d="M122 0C230 70 340 170 512 175C620 178 700 140 747 115V0Z" fill="#00efcb"/>
<path d="M202 0C300 40 400 72 502 72C610 72 700 35 747 10V0Z" fill="#00a58c"/>
</svg>
<text x="222.3" y="174.8" font-size="32.5" fill="#0a0a0a" stroke="#0a0a0a" stroke-width="0.7">J</text>
<text x="312 344.2" y="174.8" font-size="32.5" fill="#0a0a0a" stroke="#0a0a0a" stroke-width="0.7">J+</text>
<path d="M381.3 159.2L387.9 152.6V174.7" fill="none" stroke="#0a0a0a" stroke-width="3.1" stroke-linejoin="miter"/>
<text x="434.2 466.4 499.8" y="174.8" font-size="32.5" fill="#0a0a0a" stroke="#0a0a0a" stroke-width="0.7">J+2</text>
<text x="555.8 588 621.6" y="174.8" font-size="32.5" fill="#0a0a0a" stroke="#0a0a0a" stroke-width="0.7">J+3</text>
</g>
<rect x="1990" y="62" width="415.6" height="35.8" rx="9" ry="9" fill="#ffffff"/>
<rect x="1990" y="62" width="415.6" height="12" fill="#ffffff"/>
<text x="2112.7" y="89.3" font-size="24.2" font-weight="bold" fill="#0c0c0c" textLength="171.2" lengthAdjust="spacingAndGlyphs">LHB-site-L593</text>
<rect x="1991.9" y="108.2" width="411.8" height="57.300000000000004" rx="10" ry="10" fill="#ffffff" stroke="#808080" stroke-width="3.8"/>
<text x="2052.30" y="146.65" font-size="27.5" fill="#111" textLength="311.5" lengthAdjust="spacingAndGlyphs" xml:space="preserve">Consommation: 104 kWh</text>
<rect x="1991.9" y="178.3" width="411.8" height="57.300000000000004" rx="10" ry="10" fill="#ffffff" stroke="#808080" stroke-width="3.8"/>
<text x="2121.70" y="216.75" font-size="27.5" fill="#111" textLength="172.6" lengthAdjust="spacingAndGlyphs" xml:space="preserve">P Max :  6 kW</text>
<rect x="1991.9" y="248.4" width="411.8" height="57.300000000000004" rx="10" ry="10" fill="#ffffff" stroke="#808080" stroke-width="3.8"/>
<text x="2128.50" y="286.85" font-size="27.5" fill="#111" textLength="159.5" lengthAdjust="spacingAndGlyphs" xml:space="preserve">P min : 2 kW</text>
<rect x="1047.9" y="542" width="522.3" height="70.1" rx="10" ry="10" fill="#ffffff" opacity="0.93"/>
<text x="1137.6" y="588.7" font-size="30" font-weight="bold" fill="#15201a" textLength="353" lengthAdjust="spacingAndGlyphs">dimanche 12 avril 2026</text>
<rect x="562.5" y="806.6999999999999" width="411.4" height="57.1" rx="10" ry="10" fill="#ffffff" stroke="#808080" stroke-width="3.8"/>
<text x="610.20" y="845.05" font-size="27.5" fill="#111" textLength="334.8" lengthAdjust="spacingAndGlyphs" xml:space="preserve">Consommation: 1 494 kWh</text>
<rect x="1099.8000000000002" y="806.6999999999999" width="412.4" height="57.1" rx="10" ry="10" fill="#ffffff" stroke="#808080" stroke-width="3.8"/>
<text x="1222.20" y="845.05" font-size="27.5" fill="#111" textLength="188.3" lengthAdjust="spacingAndGlyphs" xml:space="preserve">P Max :  88 kW</text>
<rect x="1609.6000000000001" y="806.6999999999999" width="412.4" height="57.1" rx="10" ry="10" fill="#ffffff" stroke="#808080" stroke-width="3.8"/>
<text x="1746.30" y="845.05" font-size="27.5" fill="#111" textLength="160.1" lengthAdjust="spacingAndGlyphs" xml:space="preserve">P min : 0 kW</text>
<g id="g2e" filter="url(#b1)">
<rect x="2322.5" y="1322.5" width="115.3" height="58.3" fill="#ffffff"/>
<g transform="translate(2200,1290) scale(0.12385)">
<path d="M1290 420A105 105 0 1 0 1310 492H1215" fill="none" stroke="#0a70b8" stroke-width="44" stroke-linecap="round" stroke-linejoin="round"/>
<path d="M1368 470A62 62 0 1 1 1470 500L1385 572H1490" fill="none" stroke="#0a70b8" stroke-width="42" stroke-linecap="butt" stroke-linejoin="miter"/>
<path d="M1552 283L1480 385L1548 400L1530 590L1612 385L1556 372Z" fill="#e8622a"/>
<path d="M1640 397H1812L1775 440H1615Z" fill="#f0921e"/><path d="M1610 470H1762L1728 514H1585Z" fill="#f0921e"/><path d="M1580 545H1750L1712 590H1556Z" fill="#f0921e"/>
<text x="1562" y="358" font-size="52" font-weight="bold" fill="#e8622a" textLength="243" lengthAdjust="spacingAndGlyphs">FRANCE</text>
<text x="1130" y="630" font-size="27" fill="#3a8cc8" textLength="600" lengthAdjust="spacingAndGlyphs">Optimisation des ressources énergétiques</text>
</g></g>
</svg></body></html>
